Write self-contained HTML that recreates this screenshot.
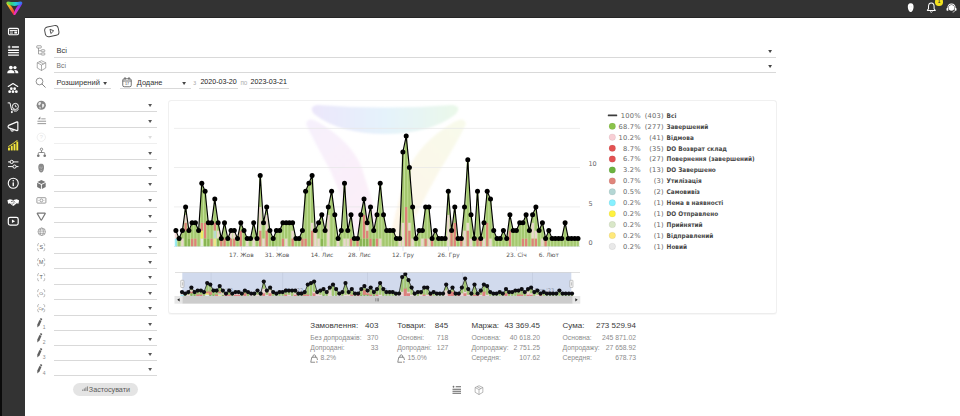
<!DOCTYPE html>
<html lang="uk"><head><meta charset="utf-8"><title>Статистика</title>
<style>
*{box-sizing:border-box;margin:0;padding:0}
html,body{width:960px;height:416px;overflow:hidden;background:#fff}
body{position:relative;font-family:"Liberation Sans",sans-serif;color:#333;font-size:7.3px}
.abs,.fic,.ul,.arr,.sbi,.t{position:absolute}
.topbar{position:absolute;left:0;top:0;width:960px;height:18.1px;background:#333;border-bottom:1.5px solid #262626}
.side{position:absolute;left:0;top:0;width:25.4px;height:416px;background:#333}
.strip{position:absolute;left:0;top:0;width:1.7px;height:416px;background:#0b0b0b}
.fic svg,.sbi svg{display:block}
.ul{height:0.8px;background:#d9d9d9}
.arr{width:4.2px;height:3.2px}
.arr svg{display:block}
.t{white-space:nowrap;line-height:1}
.card{position:absolute;left:168.3px;top:100.1px;width:608.3px;height:214px;border:1px solid #f0f0f0;border-bottom-color:#ededed;border-radius:3.5px;background:#fff;box-shadow:0 0.5px 1px rgba(0,0,0,0.035)}
.chart{position:absolute;left:0;top:0}
.btn{position:absolute;left:73.2px;top:382.5px;width:64.7px;height:13.6px;border-radius:7px;background:#e4e4e4}
.st-h{font-size:8px;color:#3a3a3a}
.st-s{font-size:6.8px;color:#8c8c8c}
.r{text-align:right}
</style></head><body>
<div class="topbar"></div><div class="side"></div><div class="strip"></div>

<!-- logo -->
<svg class="abs" style="left:5.9px;top:1px" width="16.8" height="14.5" viewBox="0 0 33 28.5">
<defs>
<linearGradient id="lg1" x1="0" y1="0" x2="1" y2="0"><stop offset="0" stop-color="#a5dc2c"/><stop offset="0.3" stop-color="#35d47a"/><stop offset="0.6" stop-color="#22c9e0"/><stop offset="1" stop-color="#3b62f2"/></linearGradient>
<linearGradient id="lg2" x1="0" y1="0" x2="0.7" y2="1"><stop offset="0" stop-color="#f3e52b"/><stop offset="0.5" stop-color="#f6921e"/><stop offset="1" stop-color="#ec2a45"/></linearGradient>
<linearGradient id="lg3" x1="1" y1="0" x2="0.3" y2="1"><stop offset="0" stop-color="#5b3df2"/><stop offset="0.5" stop-color="#a834ea"/><stop offset="1" stop-color="#f22fb0"/></linearGradient>
</defs>
<path d="M1.2 3.4 Q3 2.3 6.5 6 Q12.5 12 15 17 Q17 21 18 26.5 Q16.5 28.8 14.3 26.5 Q7 16 1.8 7 Q0.4 4.3 1.2 3.4Z" fill="url(#lg2)"/>
<path d="M31.8 3.4 Q30 2.3 26.5 6 Q20.5 12 18 17 Q16 21 15 26.5 Q16.5 28.8 18.7 26.5 Q26 16 31.2 7 Q32.6 4.3 31.8 3.4Z" fill="url(#lg3)"/>
<path d="M4 0.8 Q16.5 2.8 29 0.8 Q32.6 0.8 31.8 4 Q30.8 6.3 28 7.4 Q16.5 11.8 5 7.4 Q2.2 6.3 1.2 4 Q0.4 0.8 4 0.8Z" fill="url(#lg1)"/>
</svg>

<div class="sbi" style="top:24.5px;left:6.7px"><svg width="13" height="13" viewBox="0 0 24 24" ><rect x="2.8" y="6.3" width="18.4" height="11.6" rx="2.3" fill="none" stroke="#fff" stroke-width="2.1"/><path d="M5 10 H19" stroke="#fff" stroke-width="1.9"/><path d="M5.5 12.8 H11 M5.5 15.2 H11" stroke="#fff" stroke-width="1.3"/><rect x="13.5" y="12" width="5" height="3.8" fill="#fff"/></svg></div>
<div class="sbi" style="top:44.1px;left:6.7px"><svg width="13" height="13" viewBox="0 0 24 24" ><path d="M9 5.5 H22 M2 11.5 H22 M2 16 H22 M2 20.5 H22" stroke="#fff" stroke-width="2.6"/><path d="M1.5 5.5 H6.5 M4 3 V8" stroke="#fff" stroke-width="1.6"/></svg></div>
<div class="sbi" style="top:63.5px;left:7.4px"><svg width="11.6" height="11.6" viewBox="0 0 24 24" ><circle cx="8" cy="7.5" r="3.8" fill="#fff"/><path d="M0.5 19 Q0.5 12.5 8 12.5 Q15.5 12.5 15.5 19Z" fill="#fff"/><circle cx="16.5" cy="7.5" r="3.4" fill="#fff"/><path d="M16 12.5 Q23.5 12.5 23.5 19 H17.5 Q17.5 14.5 15 13Z" fill="#fff"/></svg></div>
<div class="sbi" style="top:82.0px;left:7.2px"><svg width="12" height="12" viewBox="0 0 24 24" ><path d="M2.5 9 L12 3 L21.5 9" fill="none" stroke="#fff" stroke-width="2.2" stroke-linejoin="round" stroke-linecap="round"/><g fill="#fff"><circle cx="8.7" cy="13.3" r="2.7"/><circle cx="15.3" cy="13.3" r="2.7"/><circle cx="5.3" cy="19.3" r="2.8"/><circle cx="12" cy="19.3" r="2.8"/><circle cx="18.7" cy="19.3" r="2.8"/></g></svg></div>
<div class="sbi" style="top:100.5px;left:6.7px"><svg width="13" height="13" viewBox="0 0 24 24" ><path d="M2 3.5 H5.5 L8.5 16.5 H13" fill="none" stroke="#fff" stroke-width="1.8" stroke-linecap="round"/><circle cx="9" cy="20.5" r="1.9" fill="#fff"/><circle cx="15.5" cy="10" r="5.6" fill="none" stroke="#fff" stroke-width="1.8"/><path d="M15.5 7 V10.5 H18" fill="none" stroke="#fff" stroke-width="1.5"/><path d="M13 18.5 Q18 20 21.5 15" fill="none" stroke="#fff" stroke-width="1.8"/></svg></div>
<div class="sbi" style="top:119.5px;left:6.7px"><svg width="13" height="13" viewBox="0 0 24 24" ><path d="M3 10 L18.5 3.5 Q20 3.2 20 5 V18 Q20 19.8 18.5 19.5 L3 14.5 Q2 14 2 12.2 Q2 10.5 3 10Z" fill="none" stroke="#fff" stroke-width="2.2" stroke-linejoin="round"/><path d="M6.5 15.5 L8 20.5 H11.5 L10.5 16.5" fill="none" stroke="#fff" stroke-width="1.8" stroke-linejoin="round"/></svg></div>
<div class="sbi" style="top:139.1px;left:6.9px"><svg width="12.5" height="12.5" viewBox="0 0 24 24" ><g fill="#f5e83b"><rect x="2" y="16.5" width="3.6" height="5.5"/><rect x="7.3" y="13" width="3.6" height="9"/><rect x="12.6" y="9.5" width="3.6" height="12.5"/><rect x="17.9" y="5" width="3.6" height="17"/><path d="M2 14 L7.5 10.5 L12.5 7 L19.5 2 L20.5 3.3 L13.4 8.3 L8.3 11.8 L2.8 15.3Z"/></g></svg></div>
<div class="sbi" style="top:158.1px;left:6.9px"><svg width="12.5" height="12.5" viewBox="0 0 24 24" ><path d="M2 7.5 H22 M2 16.5 H22" stroke="#fff" stroke-width="1.9"/><circle cx="9" cy="7.5" r="3.1" fill="#333" stroke="#fff" stroke-width="1.9"/><circle cx="14.5" cy="16.5" r="3.1" fill="#333" stroke="#fff" stroke-width="1.9"/></svg></div>
<div class="sbi" style="top:176.8px;left:6.9px"><svg width="12.5" height="12.5" viewBox="0 0 24 24" ><circle cx="12" cy="12" r="9.6" fill="none" stroke="#fff" stroke-width="2.1"/><circle cx="12" cy="7.3" r="1.5" fill="#fff"/><rect x="10.7" y="10" width="2.6" height="7.6" rx="0.8" fill="#fff"/></svg></div>
<div class="sbi" style="top:195.7px;left:6.9px"><svg width="12.6" height="12.6" viewBox="0 0 24 24" ><path d="M0.8 8.2 L5.5 6 L10 7 L12 8.3 L14 7 L18.5 6 L23.2 8.2 L21.8 14.6 L18.5 14 L13.5 18 Q12 19 10.5 18 L5.5 14 L2.2 14.6Z" fill="#fff"/><path d="M7.5 10.8 L12 9.3 L15.8 12.3 M8.8 14 L11.3 16 M11.3 12.6 L14 14.8" fill="none" stroke="#333" stroke-width="1.3"/></svg></div>
<div class="sbi" style="top:214.8px;left:6.9px"><svg width="12.5" height="12.5" viewBox="0 0 24 24" ><rect x="2.5" y="4.5" width="19" height="15" rx="3.5" fill="none" stroke="#fff" stroke-width="2.3"/><path d="M9.5 8.5 L15.5 12 L9.5 15.5Z" fill="#fff"/></svg></div>

<!-- top right icons -->
<svg class="abs" style="left:906.8px;top:3.4px" width="7.4" height="9.2" viewBox="0 0 16 21"><path d="M8 0.5 C2.5 0.5 1 5 1.5 10 C2 16 5 20.5 8 20.5 C11 20.5 14 16 14.5 10 C15 5 13.5 0.5 8 0.5Z" fill="#fff"/><path d="M4.5 9 Q5.8 8.2 7 9 M9 9 Q10.2 8.2 11.5 9 M6.5 15.5 Q8 16.3 9.5 15.5" stroke="#bbb" stroke-width="0.8" fill="none"/></svg>
<svg class="abs" style="left:925.6px;top:2px" width="10.6" height="11.2" viewBox="0 0 22 24"><path d="M11 2 C6.5 2 5 6 5 10 V14.5 L2.5 18 H19.5 L17 14.5 V10 C17 6 15.5 2 11 2Z" fill="none" stroke="#fff" stroke-width="2.2" stroke-linejoin="round"/><path d="M8.5 20.5 Q11 23.5 13.5 20.5" fill="none" stroke="#fff" stroke-width="2"/></svg>
<div class="abs" style="left:935.3px;top:-1.6px;width:7.4px;height:7.4px;border-radius:50%;background:#f3e21d"></div>
<div class="t" style="left:937.7px;top:0.3px;font-size:4.6px;font-weight:bold;color:#333">1</div>
<svg class="abs" style="left:946.3px;top:2.8px" width="11" height="10" viewBox="0 0 23 22"><path d="M11.5 1 C5.5 1 2.5 5 2.5 10 V11 H1.8 Q0.5 11 0.5 12.5 V15.5 Q0.5 17 1.8 17 H4.5 V10 C4.5 6 7 3.5 11.5 3.5 C16 3.5 18.5 6 18.5 10 V17 H21.2 Q22.5 17 22.5 15.5 V12.5 Q22.5 11 21.2 11 H20.5 V10 C20.5 5 17.5 1 11.5 1Z" fill="#fff"/><circle cx="11.5" cy="10.5" r="6.3" fill="#fff"/><path d="M18.5 17 Q18.5 20 14 20.2" fill="none" stroke="#fff" stroke-width="1.5"/></svg>

<!-- header -->
<svg class="abs" style="left:42.6px;top:24.4px" width="17.6" height="14.3" viewBox="0 0 32 26"><g transform="rotate(-11 16 13)"><rect x="3.5" y="4" width="25" height="18" rx="6" fill="none" stroke="#444" stroke-width="1.7"/><path d="M13.5 9 L19.5 13 L13.5 17Z" fill="none" stroke="#444" stroke-width="1.5" stroke-linejoin="round"/></g></svg>

<svg class="abs" style="left:35.6px;top:45.3px" width="10.5" height="11" viewBox="0 0 21 22"><g fill="none" stroke="#777" stroke-width="1.3"><rect x="1.5" y="1.5" width="9" height="4.5" rx="1"/><path d="M5 6 V18 H10 M5 11.5 H10"/><rect x="10.5" y="9.5" width="7" height="4" rx="1"/><rect x="10.5" y="16" width="7" height="4" rx="1"/></g></svg>
<div class="t" style="left:56.6px;top:47.1px;font-size:7.5px;color:#333">Всі</div>
<div class="ul" style="left:54.3px;top:56.6px;width:722px"></div>
<div class="arr" style="left:768.3px;top:49.5px"><svg width="4.2" height="3.2" viewBox="0 0 42 30" preserveAspectRatio="none"><path d="M2 1 H40 L21 29Z" fill="#444"/></svg></div>

<svg class="abs" style="left:35.5px;top:60.4px" width="11" height="11.5" viewBox="0 0 22 23"><g fill="none" stroke="#777" stroke-width="1.2" stroke-linejoin="round"><path d="M11 1.5 L19.5 5.5 V16 L11 21 L2.5 16 V5.5Z"/><path d="M2.5 5.5 L11 10 L19.5 5.5 M11 10 V21"/><path d="M6.7 3.5 L15.2 7.8"/></g></svg>
<div class="t" style="left:56.6px;top:63.2px;font-size:6.7px;color:#707070">Всі</div>
<div class="ul" style="left:54.3px;top:72.4px;width:722px"></div>
<div class="arr" style="left:768.3px;top:64.7px"><svg width="4.2" height="3.2" viewBox="0 0 42 30" preserveAspectRatio="none"><path d="M2 1 H40 L21 29Z" fill="#444"/></svg></div>

<svg class="abs" style="left:35.3px;top:77.2px" width="11" height="11" viewBox="0 0 22 22"><circle cx="9" cy="9" r="6.8" fill="none" stroke="#666" stroke-width="1.4"/><path d="M14 14 L20.5 20.5" stroke="#666" stroke-width="1.6" stroke-linecap="round"/></svg>
<div class="t" style="left:56.6px;top:79.1px;font-size:7.5px;color:#333">Розширений</div>
<div class="arr" style="left:102.6px;top:81.5px"><svg width="4.2" height="3.2" viewBox="0 0 42 30" preserveAspectRatio="none"><path d="M2 1 H40 L21 29Z" fill="#444"/></svg></div>
<div class="ul" style="left:54.3px;top:88px;width:57.1px"></div>

<svg class="abs" style="left:122px;top:77.3px" width="10" height="10.5" viewBox="0 0 20 21"><rect x="1.5" y="3.5" width="17" height="16" rx="3" fill="none" stroke="#444" stroke-width="1.5"/><path d="M1.5 8 H18.5" stroke="#444" stroke-width="1.5"/><path d="M6 1 V5 M14 1 V5" stroke="#444" stroke-width="1.6" stroke-linecap="round"/><text x="10" y="16.8" font-size="7.5" text-anchor="middle" fill="#444" font-family="Liberation Sans, sans-serif">17</text></svg>
<div class="t" style="left:136.8px;top:79.1px;font-size:7.4px;color:#333">Додане</div>
<div class="arr" style="left:182.3px;top:81.5px"><svg width="4.2" height="3.2" viewBox="0 0 42 30" preserveAspectRatio="none"><path d="M2 1 H40 L21 29Z" fill="#444"/></svg></div>
<div class="ul" style="left:119.9px;top:88px;width:70.9px"></div>

<div class="t" style="left:193.3px;top:80.1px;font-size:6.4px;color:#b0b0b0">з</div>
<div class="t" style="left:200.4px;top:79.3px;font-size:7.1px;color:#222">2020-03-20</div>
<div class="ul" style="left:198.7px;top:88px;width:39.3px"></div>
<div class="t" style="left:240.4px;top:80.1px;font-size:6.4px;color:#b0b0b0">по</div>
<div class="t" style="left:250.6px;top:79.3px;font-size:7.1px;color:#222">2023-03-21</div>
<div class="ul" style="left:249px;top:88px;width:39.5px"></div>

<!-- left filters -->
<div class="fic" style="left:36.0px;top:99.5px"><svg width="10.5" height="10.5" viewBox="0 0 24 24" ><circle cx="12" cy="12" r="10.5" fill="#878787"/><path d="M7 5 Q11 4 12 7 Q10 9 9 12 Q7 13 5 10 Q5 7 7 5Z M14 9 Q18 8 19 12 Q18 16 15 18 Q13 15 14 12Z M8 15 Q10 15 11 18 Q10 20 8 19Z" fill="#fff" opacity="0.85"/></svg></div>
<div class="ul" style="left:53.7px;top:111.1px;width:103.2px;background:#d9d9d9"></div>
<div class="arr" style="left:148.2px;top:103.9px"><svg width="4.2" height="3.2" viewBox="0 0 42 30" preserveAspectRatio="none"><path d="M2 1 H40 L21 29Z" fill="#555"/></svg></div>
<div class="fic" style="left:35.5px;top:115.0px"><svg width="11.5" height="11.5" viewBox="0 0 24 24" ><path d="M4 9 L9 3 L9 9Z" fill="#777"/><path d="M11 8 H20" stroke="#999" stroke-width="2"/><path d="M3 13 H21 M3 18 H21" stroke="#777" stroke-width="1.6"/></svg></div>
<div class="ul" style="left:53.7px;top:127.1px;width:103.2px;background:#d9d9d9"></div>
<div class="arr" style="left:148.2px;top:119.9px"><svg width="4.2" height="3.2" viewBox="0 0 42 30" preserveAspectRatio="none"><path d="M2 1 H40 L21 29Z" fill="#555"/></svg></div>
<div class="fic" style="left:36.0px;top:131.5px"><svg width="10.5" height="10.5" viewBox="0 0 24 24" ><circle cx="12" cy="12" r="9.5" fill="none" stroke="#e3e3e3" stroke-width="1.3"/><text x="12" y="16.5" font-size="13" text-anchor="middle" fill="#e3e3e3" font-family="Liberation Sans, sans-serif">?</text></svg></div>
<div class="ul" style="left:53.7px;top:143.0px;width:103.2px;background:#efefef"></div>
<div class="arr" style="left:148.2px;top:135.8px"><svg width="4.2" height="3.2" viewBox="0 0 42 30" preserveAspectRatio="none"><path d="M2 1 H40 L21 29Z" fill="#dcdcdc"/></svg></div>
<div class="fic" style="left:35.8px;top:147.0px"><svg width="11" height="11" viewBox="0 0 24 24" ><circle cx="12" cy="5" r="2.6" fill="none" stroke="#777" stroke-width="1.8"/><path d="M12 8 V12 M5 17 V14 Q5 12 7 12 H17 Q19 12 19 14 V17" fill="none" stroke="#777" stroke-width="1.9"/><circle cx="5" cy="19" r="2.9" fill="#777"/><circle cx="19" cy="19" r="2.9" fill="#777"/></svg></div>
<div class="ul" style="left:53.7px;top:158.8px;width:103.2px;background:#d9d9d9"></div>
<div class="arr" style="left:148.2px;top:151.6px"><svg width="4.2" height="3.2" viewBox="0 0 42 30" preserveAspectRatio="none"><path d="M2 1 H40 L21 29Z" fill="#555"/></svg></div>
<div class="fic" style="left:36.1px;top:163.1px"><svg width="10.4" height="10.4" viewBox="0 0 24 24" ><path d="M12 2 C6 2 5 7 5.5 12 C6 18 9 22 12 22 C15 22 18 18 18.5 12 C19 7 18 2 12 2Z" fill="#8a8a8a"/><path d="M8 10 Q9.5 9 11 10 M13 10 Q14.5 9 16 10 M10 17 Q12 18 14 17 M12 11 V14" stroke="#fff" stroke-width="0.9" fill="none" opacity="0.8"/></svg></div>
<div class="ul" style="left:53.7px;top:174.6px;width:103.2px;background:#d9d9d9"></div>
<div class="arr" style="left:148.2px;top:167.4px"><svg width="4.2" height="3.2" viewBox="0 0 42 30" preserveAspectRatio="none"><path d="M2 1 H40 L21 29Z" fill="#555"/></svg></div>
<div class="fic" style="left:35.9px;top:178.9px"><svg width="10.8" height="10.8" viewBox="0 0 24 24" ><path d="M12 2 L21 6.5 L12 11 L3 6.5Z" fill="#777"/><path d="M2.5 8.5 L11 12.8 V22 L2.5 17.7Z" fill="#777"/><path d="M21.5 8.5 L13 12.8 V22 L21.5 17.7Z" fill="#777"/></svg></div>
<div class="ul" style="left:53.7px;top:190.6px;width:103.2px;background:#d9d9d9"></div>
<div class="arr" style="left:148.2px;top:183.4px"><svg width="4.2" height="3.2" viewBox="0 0 42 30" preserveAspectRatio="none"><path d="M2 1 H40 L21 29Z" fill="#555"/></svg></div>
<div class="fic" style="left:35.9px;top:194.9px"><svg width="10.8" height="10.8" viewBox="0 0 24 24" ><rect x="2" y="6" width="20" height="12" rx="1.5" fill="none" stroke="#777" stroke-width="1.6"/><circle cx="12" cy="12" r="3.2" fill="none" stroke="#777" stroke-width="1.4"/><path d="M5.5 12 H7 M17 12 H18.5" stroke="#777" stroke-width="1.4"/></svg></div>
<div class="ul" style="left:53.7px;top:206.6px;width:103.2px;background:#d9d9d9"></div>
<div class="arr" style="left:148.2px;top:199.4px"><svg width="4.2" height="3.2" viewBox="0 0 42 30" preserveAspectRatio="none"><path d="M2 1 H40 L21 29Z" fill="#555"/></svg></div>
<div class="fic" style="left:36.0px;top:210.7px"><svg width="10.5" height="10.5" viewBox="0 0 24 24" ><path d="M3.5 5 H20.5 Q21.5 5 21 6 L13 20 Q12 21.5 11 20 L3 6 Q2.5 5 3.5 5Z" fill="none" stroke="#777" stroke-width="2.6" stroke-linejoin="round"/></svg></div>
<div class="ul" style="left:53.7px;top:222.2px;width:103.2px;background:#d9d9d9"></div>
<div class="arr" style="left:148.2px;top:215.0px"><svg width="4.2" height="3.2" viewBox="0 0 42 30" preserveAspectRatio="none"><path d="M2 1 H40 L21 29Z" fill="#555"/></svg></div>
<div class="fic" style="left:36.5px;top:226.7px"><svg width="9.5" height="9.5" viewBox="0 0 24 24" ><circle cx="12" cy="12" r="9.5" fill="none" stroke="#777" stroke-width="1.4"/><ellipse cx="12" cy="12" rx="4.2" ry="9.5" fill="none" stroke="#777" stroke-width="1.2"/><path d="M2.5 12 H21.5 M4 7.5 H20 M4 16.5 H20" stroke="#777" stroke-width="1.2"/></svg></div>
<div class="ul" style="left:53.7px;top:237.4px;width:103.2px;background:#d9d9d9"></div>
<div class="arr" style="left:148.2px;top:230.2px"><svg width="4.2" height="3.2" viewBox="0 0 42 30" preserveAspectRatio="none"><path d="M2 1 H40 L21 29Z" fill="#555"/></svg></div>
<div class="fic" style="left:36.1px;top:241.6px"><svg width="10.4" height="10.4" viewBox="0 0 24 24" ><path d="M7 3.5 Q4 3.5 4 6 V9.5 M4 14.5 V18 Q4 20.5 7 20.5 M17 3.5 Q20 3.5 20 6 V9.5 M20 14.5 V18 Q20 20.5 17 20.5" fill="none" stroke="#888" stroke-width="1.3"/><text x="12" y="16.5" font-size="12.5" text-anchor="middle" fill="#5a5a5a" font-family="Liberation Sans, sans-serif">S</text></svg></div>
<div class="ul" style="left:53.7px;top:252.8px;width:103.2px;background:#d9d9d9"></div>
<div class="arr" style="left:148.2px;top:245.6px"><svg width="4.2" height="3.2" viewBox="0 0 42 30" preserveAspectRatio="none"><path d="M2 1 H40 L21 29Z" fill="#555"/></svg></div>
<div class="fic" style="left:36.1px;top:257.0px"><svg width="10.4" height="10.4" viewBox="0 0 24 24" ><path d="M7 3.5 Q4 3.5 4 6 V9.5 M4 14.5 V18 Q4 20.5 7 20.5 M17 3.5 Q20 3.5 20 6 V9.5 M20 14.5 V18 Q20 20.5 17 20.5" fill="none" stroke="#888" stroke-width="1.3"/><text x="12" y="16.3" font-size="12" text-anchor="middle" fill="#5a5a5a" font-family="Liberation Sans, sans-serif">M</text></svg></div>
<div class="ul" style="left:53.7px;top:268.2px;width:103.2px;background:#d9d9d9"></div>
<div class="arr" style="left:148.2px;top:261.0px"><svg width="4.2" height="3.2" viewBox="0 0 42 30" preserveAspectRatio="none"><path d="M2 1 H40 L21 29Z" fill="#555"/></svg></div>
<div class="fic" style="left:36.1px;top:272.4px"><svg width="10.4" height="10.4" viewBox="0 0 24 24" ><path d="M7 3.5 Q4 3.5 4 6 V9.5 M4 14.5 V18 Q4 20.5 7 20.5 M17 3.5 Q20 3.5 20 6 V9.5 M20 14.5 V18 Q20 20.5 17 20.5" fill="none" stroke="#888" stroke-width="1.3"/><text x="12" y="16.5" font-size="12.5" text-anchor="middle" fill="#5a5a5a" font-family="Liberation Sans, sans-serif">T</text></svg></div>
<div class="ul" style="left:53.7px;top:283.6px;width:103.2px;background:#d9d9d9"></div>
<div class="arr" style="left:148.2px;top:276.4px"><svg width="4.2" height="3.2" viewBox="0 0 42 30" preserveAspectRatio="none"><path d="M2 1 H40 L21 29Z" fill="#555"/></svg></div>
<div class="fic" style="left:36.1px;top:287.8px"><svg width="10.4" height="10.4" viewBox="0 0 24 24" ><path d="M7 3.5 Q4 3.5 4 6 V9.5 M4 14.5 V18 Q4 20.5 7 20.5 M17 3.5 Q20 3.5 20 6 V9.5 M20 14.5 V18 Q20 20.5 17 20.5" fill="none" stroke="#888" stroke-width="1.3"/><text x="12" y="15.4" font-size="9.5" text-anchor="middle" fill="#5a5a5a" font-family="Liberation Sans, sans-serif">Ct</text></svg></div>
<div class="ul" style="left:53.7px;top:299.0px;width:103.2px;background:#d9d9d9"></div>
<div class="arr" style="left:148.2px;top:291.8px"><svg width="4.2" height="3.2" viewBox="0 0 42 30" preserveAspectRatio="none"><path d="M2 1 H40 L21 29Z" fill="#555"/></svg></div>
<div class="fic" style="left:36.1px;top:303.4px"><svg width="10.4" height="10.4" viewBox="0 0 24 24" ><path d="M7 3.5 Q4 3.5 4 6 V9.5 M4 14.5 V18 Q4 20.5 7 20.5 M17 3.5 Q20 3.5 20 6 V9.5 M20 14.5 V18 Q20 20.5 17 20.5" fill="none" stroke="#888" stroke-width="1.3"/><text x="12" y="15.4" font-size="9.5" text-anchor="middle" fill="#5a5a5a" font-family="Liberation Sans, sans-serif">Cp</text></svg></div>
<div class="ul" style="left:53.7px;top:314.6px;width:103.2px;background:#d9d9d9"></div>
<div class="arr" style="left:148.2px;top:307.4px"><svg width="4.2" height="3.2" viewBox="0 0 42 30" preserveAspectRatio="none"><path d="M2 1 H40 L21 29Z" fill="#555"/></svg></div>
<div class="fic" style="left:36.2px;top:318.1px"><svg width="13" height="11.2" viewBox="0 0 28 24" ><g transform="translate(6.9,11.3) rotate(24)" fill="#5f5f5f"><path d="M-2.5 -6.8 H2.5 V4.2 L0 10.2 L-2.5 4.2Z"/><path d="M-2.5 -8.2 V-9.8 Q-2.5 -11.4 -0.9 -11.4 H0.9 Q2.5 -11.4 2.5 -9.8 V-8.2Z"/></g><text x="14.6" y="23.3" font-size="10.8" fill="#8c8c8c" font-family="Liberation Sans, sans-serif">1</text></svg></div>
<div class="ul" style="left:53.7px;top:329.7px;width:103.2px;background:#d9d9d9"></div>
<div class="arr" style="left:148.2px;top:322.5px"><svg width="4.2" height="3.2" viewBox="0 0 42 30" preserveAspectRatio="none"><path d="M2 1 H40 L21 29Z" fill="#555"/></svg></div>
<div class="fic" style="left:36.2px;top:333.3px"><svg width="13" height="11.2" viewBox="0 0 28 24" ><g transform="translate(6.9,11.3) rotate(24)" fill="#5f5f5f"><path d="M-2.5 -6.8 H2.5 V4.2 L0 10.2 L-2.5 4.2Z"/><path d="M-2.5 -8.2 V-9.8 Q-2.5 -11.4 -0.9 -11.4 H0.9 Q2.5 -11.4 2.5 -9.8 V-8.2Z"/></g><text x="14.6" y="23.3" font-size="10.8" fill="#8c8c8c" font-family="Liberation Sans, sans-serif">2</text></svg></div>
<div class="ul" style="left:53.7px;top:344.9px;width:103.2px;background:#d9d9d9"></div>
<div class="arr" style="left:148.2px;top:337.7px"><svg width="4.2" height="3.2" viewBox="0 0 42 30" preserveAspectRatio="none"><path d="M2 1 H40 L21 29Z" fill="#555"/></svg></div>
<div class="fic" style="left:36.2px;top:348.4px"><svg width="13" height="11.2" viewBox="0 0 28 24" ><g transform="translate(6.9,11.3) rotate(24)" fill="#5f5f5f"><path d="M-2.5 -6.8 H2.5 V4.2 L0 10.2 L-2.5 4.2Z"/><path d="M-2.5 -8.2 V-9.8 Q-2.5 -11.4 -0.9 -11.4 H0.9 Q2.5 -11.4 2.5 -9.8 V-8.2Z"/></g><text x="14.6" y="23.3" font-size="10.8" fill="#8c8c8c" font-family="Liberation Sans, sans-serif">3</text></svg></div>
<div class="ul" style="left:53.7px;top:360.0px;width:103.2px;background:#d9d9d9"></div>
<div class="arr" style="left:148.2px;top:352.8px"><svg width="4.2" height="3.2" viewBox="0 0 42 30" preserveAspectRatio="none"><path d="M2 1 H40 L21 29Z" fill="#555"/></svg></div>
<div class="fic" style="left:36.2px;top:363.6px"><svg width="13" height="11.2" viewBox="0 0 28 24" ><g transform="translate(6.9,11.3) rotate(24)" fill="#5f5f5f"><path d="M-2.5 -6.8 H2.5 V4.2 L0 10.2 L-2.5 4.2Z"/><path d="M-2.5 -8.2 V-9.8 Q-2.5 -11.4 -0.9 -11.4 H0.9 Q2.5 -11.4 2.5 -9.8 V-8.2Z"/></g><text x="14.6" y="23.3" font-size="10.8" fill="#8c8c8c" font-family="Liberation Sans, sans-serif">4</text></svg></div>
<div class="ul" style="left:53.7px;top:375.2px;width:103.2px;background:#d9d9d9"></div>
<div class="arr" style="left:148.2px;top:368.0px"><svg width="4.2" height="3.2" viewBox="0 0 42 30" preserveAspectRatio="none"><path d="M2 1 H40 L21 29Z" fill="#555"/></svg></div>
<div class="btn"></div>
<svg class="abs" style="left:81.6px;top:386.2px" width="6.2" height="5.4" viewBox="0 0 12 10"><g fill="#8a8a8a"><rect x="0.5" y="6.5" width="2" height="3"/><rect x="3.5" y="4.5" width="2" height="5"/><rect x="6.5" y="2.5" width="2" height="7"/><rect x="9.5" y="0.5" width="2" height="9"/></g></svg>
<div class="t" style="left:88.8px;top:385.5px;font-size:7.2px;color:#5a5a5a">Застосувати</div>

<!-- chart card -->
<div class="card"></div>
<svg class="chart" width="960" height="416" viewBox="0 0 960 416">
<defs>
<linearGradient id="wm1" x1="0" y1="0" x2="1" y2="0"><stop offset="0" stop-color="#b9a6f0"/><stop offset="0.5" stop-color="#9fd0f2"/><stop offset="1" stop-color="#b4e8b0"/></linearGradient>
<linearGradient id="wm2" x1="0" y1="0" x2="0.6" y2="1"><stop offset="0" stop-color="#c9a2f0"/><stop offset="1" stop-color="#f2a0d0"/></linearGradient>
<linearGradient id="wm3" x1="1" y1="0" x2="0.4" y2="1"><stop offset="0" stop-color="#dcea9c"/><stop offset="1" stop-color="#f8cf90"/></linearGradient>
<filter id="bl" x="-10%" y="-10%" width="120%" height="120%"><feGaussianBlur stdDeviation="1.2"/></filter>
</defs>
<g filter="url(#bl)">
<path d="M318 105 Q385 110 452 105 Q462 106 456 114 Q430 134 385 134 Q340 134 314 114 Q308 106 318 105Z" fill="url(#wm1)" opacity="0.27"/>
<path d="M306 124 Q308 116 318 122 Q352 142 362 168 Q372 200 386 246 L360 246 Q345 205 330 170 Q316 145 306 124Z" fill="url(#wm2)" opacity="0.16"/>
<path d="M466 124 Q464 116 454 122 Q420 142 408 170 Q398 200 388 246 L402 246 Q420 205 440 170 Q456 145 466 124Z" fill="url(#wm3)" opacity="0.2"/>
</g>
<rect x="174" y="206.60" width="406" height="0.7" fill="#e6e6e6"/>
<rect x="174" y="167.25" width="406" height="0.7" fill="#e6e6e6"/>
<rect x="174" y="127.90" width="406" height="0.7" fill="#e6e6e6"/>
<rect x="174" y="246.20" width="406" height="0.7" fill="#d4dbe8"/>
<rect x="241.0" y="246.8" width="0.6" height="4" fill="#ccd6eb"/>
<rect x="276.7" y="246.8" width="0.6" height="4" fill="#ccd6eb"/>
<rect x="321.7" y="246.8" width="0.6" height="4" fill="#ccd6eb"/>
<rect x="359.1" y="246.8" width="0.6" height="4" fill="#ccd6eb"/>
<rect x="402.7" y="246.8" width="0.6" height="4" fill="#ccd6eb"/>
<rect x="448.3" y="246.8" width="0.6" height="4" fill="#ccd6eb"/>
<rect x="516.2" y="246.8" width="0.6" height="4" fill="#ccd6eb"/>
<rect x="548.5" y="246.8" width="0.6" height="4" fill="#ccd6eb"/>
<polygon points="175.9,246.3 175.9,230.6 179.1,238.4 182.4,230.6 185.6,207.0 188.9,230.6 192.1,222.7 195.4,222.7 198.6,230.6 201.8,183.3 205.1,191.2 208.3,222.7 211.6,222.7 214.8,199.1 218.1,222.7 221.3,238.4 224.5,222.7 227.8,238.4 231.0,230.6 234.3,230.6 237.5,238.4 240.8,222.7 244.0,230.6 247.2,238.4 250.5,238.4 253.7,222.7 257.0,238.4 260.2,175.5 263.5,222.7 266.7,207.0 269.9,230.6 273.2,238.4 276.4,230.6 279.7,230.6 282.9,222.7 286.2,222.7 289.4,222.7 292.6,222.7 295.9,238.4 299.1,238.4 302.4,230.6 305.6,191.2 308.9,183.3 312.1,175.5 315.3,230.6 318.6,222.7 321.8,214.8 325.1,230.6 328.3,207.0 331.6,191.2 334.8,214.8 338.1,238.4 341.3,230.6 344.5,183.3 347.8,230.6 351.0,214.8 354.3,238.4 357.5,238.4 360.8,214.8 364.0,199.1 367.2,222.7 370.5,207.0 373.7,230.6 377.0,214.8 380.2,183.3 383.5,214.8 386.7,230.6 389.9,230.6 393.2,230.6 396.4,238.4 399.7,238.4 402.9,151.9 406.2,136.1 409.4,167.6 412.6,207.0 415.9,238.4 419.1,230.6 422.4,230.6 425.6,207.0 428.9,207.0 432.1,238.4 435.3,230.6 438.6,238.4 441.8,238.4 445.1,238.4 448.3,191.2 451.6,230.6 454.8,207.0 458.0,238.4 461.3,238.4 464.5,207.0 467.8,159.7 471.0,214.8 474.3,238.4 477.5,191.2 480.7,238.4 484.0,222.7 487.2,191.2 490.5,199.1 493.7,230.6 497.0,238.4 500.2,238.4 503.4,230.6 506.7,238.4 509.9,214.8 513.2,230.6 516.4,230.6 519.7,222.7 522.9,222.7 526.1,214.8 529.4,230.6 532.6,214.8 535.9,207.0 539.1,230.6 542.4,222.7 545.6,238.4 548.8,230.6 552.1,238.4 555.3,238.4 558.6,238.4 561.8,238.4 565.1,222.7 568.3,238.4 571.5,238.4 574.8,238.4 578.0,238.4 578.0,246.3" fill="#acd274" fill-opacity="0.72"/>
<g opacity="0.85">
<rect x="174.75" y="238.43" width="2.3" height="7.87" fill="#8be9f5"/>
<rect x="174.75" y="230.56" width="2.3" height="7.87" fill="#f1d5d7"/>
<rect x="177.99" y="238.43" width="2.3" height="7.87" fill="#9fc468"/>
<rect x="181.24" y="238.43" width="2.3" height="7.87" fill="#f1d5d7"/>
<rect x="181.24" y="230.56" width="2.3" height="7.87" fill="#9fc468"/>
<rect x="184.48" y="230.56" width="2.3" height="15.74" fill="#7fae48"/>
<rect x="184.48" y="222.69" width="2.3" height="7.87" fill="#e27272"/>
<rect x="184.48" y="214.82" width="2.3" height="7.87" fill="#f1d5d7"/>
<rect x="184.48" y="206.95" width="2.3" height="7.87" fill="#9fc468"/>
<rect x="187.72" y="238.43" width="2.3" height="7.87" fill="#7fae48"/>
<rect x="187.72" y="230.56" width="2.3" height="7.87" fill="#9fc468"/>
<rect x="190.97" y="238.43" width="2.3" height="7.87" fill="#e27272"/>
<rect x="190.97" y="222.69" width="2.3" height="15.74" fill="#9fc468"/>
<rect x="194.21" y="238.43" width="2.3" height="7.87" fill="#e27272"/>
<rect x="194.21" y="222.69" width="2.3" height="15.74" fill="#9fc468"/>
<rect x="197.45" y="230.56" width="2.3" height="15.74" fill="#9fc468"/>
<rect x="200.69" y="238.43" width="2.3" height="7.87" fill="#ececec"/>
<rect x="200.69" y="230.56" width="2.3" height="7.87" fill="#f5ef5a"/>
<rect x="200.69" y="222.69" width="2.3" height="7.87" fill="#e27272"/>
<rect x="200.69" y="183.34" width="2.3" height="39.35" fill="#9fc468"/>
<rect x="203.94" y="238.43" width="2.3" height="7.87" fill="#7fae48"/>
<rect x="203.94" y="222.69" width="2.3" height="15.74" fill="#e27272"/>
<rect x="203.94" y="191.21" width="2.3" height="31.48" fill="#9fc468"/>
<rect x="207.18" y="238.43" width="2.3" height="7.87" fill="#7fae48"/>
<rect x="207.18" y="222.69" width="2.3" height="15.74" fill="#9fc468"/>
<rect x="210.42" y="238.43" width="2.3" height="7.87" fill="#e27272"/>
<rect x="210.42" y="222.69" width="2.3" height="15.74" fill="#9fc468"/>
<rect x="213.67" y="238.43" width="2.3" height="7.87" fill="#f7e98a"/>
<rect x="213.67" y="230.56" width="2.3" height="7.87" fill="#b5d9d6"/>
<rect x="213.67" y="222.69" width="2.3" height="7.87" fill="#e27272"/>
<rect x="213.67" y="199.08" width="2.3" height="23.61" fill="#9fc468"/>
<rect x="216.91" y="238.43" width="2.3" height="7.87" fill="#7fae48"/>
<rect x="216.91" y="230.56" width="2.3" height="7.87" fill="#f1d5d7"/>
<rect x="216.91" y="222.69" width="2.3" height="7.87" fill="#9fc468"/>
<rect x="220.15" y="238.43" width="2.3" height="7.87" fill="#e27272"/>
<rect x="223.40" y="238.43" width="2.3" height="7.87" fill="#e27272"/>
<rect x="223.40" y="222.69" width="2.3" height="15.74" fill="#9fc468"/>
<rect x="226.64" y="238.43" width="2.3" height="7.87" fill="#9fc468"/>
<rect x="229.88" y="238.43" width="2.3" height="7.87" fill="#e27272"/>
<rect x="229.88" y="230.56" width="2.3" height="7.87" fill="#f1d5d7"/>
<rect x="233.12" y="238.43" width="2.3" height="7.87" fill="#e27272"/>
<rect x="233.12" y="230.56" width="2.3" height="7.87" fill="#f1d5d7"/>
<rect x="236.37" y="238.43" width="2.3" height="7.87" fill="#9fc468"/>
<rect x="239.61" y="230.56" width="2.3" height="15.74" fill="#e27272"/>
<rect x="239.61" y="222.69" width="2.3" height="7.87" fill="#9fc468"/>
<rect x="242.85" y="230.56" width="2.3" height="15.74" fill="#9fc468"/>
<rect x="246.10" y="238.43" width="2.3" height="7.87" fill="#f1d5d7"/>
<rect x="249.34" y="238.43" width="2.3" height="7.87" fill="#9fc468"/>
<rect x="252.58" y="238.43" width="2.3" height="7.87" fill="#f1d5d7"/>
<rect x="252.58" y="222.69" width="2.3" height="15.74" fill="#9fc468"/>
<rect x="255.83" y="238.43" width="2.3" height="7.87" fill="#9fc468"/>
<rect x="259.07" y="230.56" width="2.3" height="15.74" fill="#e27272"/>
<rect x="259.07" y="206.95" width="2.3" height="23.61" fill="#f1d5d7"/>
<rect x="259.07" y="175.47" width="2.3" height="31.48" fill="#9fc468"/>
<rect x="262.31" y="238.43" width="2.3" height="7.87" fill="#f1d5d7"/>
<rect x="262.31" y="222.69" width="2.3" height="15.74" fill="#9fc468"/>
<rect x="265.55" y="230.56" width="2.3" height="15.74" fill="#e27272"/>
<rect x="265.55" y="214.82" width="2.3" height="15.74" fill="#f1d5d7"/>
<rect x="265.55" y="206.95" width="2.3" height="7.87" fill="#9fc468"/>
<rect x="268.80" y="230.56" width="2.3" height="15.74" fill="#9fc468"/>
<rect x="272.04" y="238.43" width="2.3" height="7.87" fill="#7fae48"/>
<rect x="275.28" y="230.56" width="2.3" height="15.74" fill="#9fc468"/>
<rect x="278.53" y="230.56" width="2.3" height="15.74" fill="#9fc468"/>
<rect x="281.77" y="238.43" width="2.3" height="7.87" fill="#e27272"/>
<rect x="281.77" y="222.69" width="2.3" height="15.74" fill="#9fc468"/>
<rect x="285.01" y="238.43" width="2.3" height="7.87" fill="#f1d5d7"/>
<rect x="285.01" y="222.69" width="2.3" height="15.74" fill="#9fc468"/>
<rect x="288.25" y="222.69" width="2.3" height="23.61" fill="#9fc468"/>
<rect x="291.50" y="238.43" width="2.3" height="7.87" fill="#e27272"/>
<rect x="291.50" y="230.56" width="2.3" height="7.87" fill="#f1d5d7"/>
<rect x="291.50" y="222.69" width="2.3" height="7.87" fill="#9fc468"/>
<rect x="294.74" y="238.43" width="2.3" height="7.87" fill="#9fc468"/>
<rect x="297.98" y="238.43" width="2.3" height="7.87" fill="#9fc468"/>
<rect x="301.23" y="238.43" width="2.3" height="7.87" fill="#e27272"/>
<rect x="301.23" y="230.56" width="2.3" height="7.87" fill="#9fc468"/>
<rect x="304.47" y="238.43" width="2.3" height="7.87" fill="#e27272"/>
<rect x="304.47" y="191.21" width="2.3" height="47.22" fill="#9fc468"/>
<rect x="307.71" y="183.34" width="2.3" height="62.96" fill="#9fc468"/>
<rect x="310.96" y="230.56" width="2.3" height="15.74" fill="#e27272"/>
<rect x="310.96" y="222.69" width="2.3" height="7.87" fill="#f1d5d7"/>
<rect x="310.96" y="175.47" width="2.3" height="47.22" fill="#9fc468"/>
<rect x="314.20" y="230.56" width="2.3" height="15.74" fill="#f1d5d7"/>
<rect x="317.44" y="238.43" width="2.3" height="7.87" fill="#f1d5d7"/>
<rect x="317.44" y="222.69" width="2.3" height="15.74" fill="#9fc468"/>
<rect x="320.69" y="238.43" width="2.3" height="7.87" fill="#7fae48"/>
<rect x="320.69" y="214.82" width="2.3" height="23.61" fill="#9fc468"/>
<rect x="323.93" y="230.56" width="2.3" height="15.74" fill="#9fc468"/>
<rect x="327.17" y="214.82" width="2.3" height="31.48" fill="#f1d5d7"/>
<rect x="327.17" y="206.95" width="2.3" height="7.87" fill="#9fc468"/>
<rect x="330.41" y="191.21" width="2.3" height="55.09" fill="#9fc468"/>
<rect x="333.66" y="214.82" width="2.3" height="31.48" fill="#9fc468"/>
<rect x="336.90" y="238.43" width="2.3" height="7.87" fill="#f1d5d7"/>
<rect x="340.14" y="230.56" width="2.3" height="15.74" fill="#9fc468"/>
<rect x="343.39" y="238.43" width="2.3" height="7.87" fill="#f1d5d7"/>
<rect x="343.39" y="183.34" width="2.3" height="55.09" fill="#9fc468"/>
<rect x="346.63" y="238.43" width="2.3" height="7.87" fill="#f1d5d7"/>
<rect x="346.63" y="230.56" width="2.3" height="7.87" fill="#9fc468"/>
<rect x="349.87" y="238.43" width="2.3" height="7.87" fill="#e27272"/>
<rect x="349.87" y="214.82" width="2.3" height="23.61" fill="#9fc468"/>
<rect x="353.12" y="238.43" width="2.3" height="7.87" fill="#9fc468"/>
<rect x="356.36" y="238.43" width="2.3" height="7.87" fill="#e27272"/>
<rect x="359.60" y="238.43" width="2.3" height="7.87" fill="#7fae48"/>
<rect x="359.60" y="214.82" width="2.3" height="23.61" fill="#9fc468"/>
<rect x="362.84" y="238.43" width="2.3" height="7.87" fill="#7fae48"/>
<rect x="362.84" y="214.82" width="2.3" height="23.61" fill="#e27272"/>
<rect x="362.84" y="199.08" width="2.3" height="15.74" fill="#9fc468"/>
<rect x="366.09" y="238.43" width="2.3" height="7.87" fill="#7fae48"/>
<rect x="366.09" y="230.56" width="2.3" height="7.87" fill="#e27272"/>
<rect x="366.09" y="222.69" width="2.3" height="7.87" fill="#f1d5d7"/>
<rect x="369.33" y="238.43" width="2.3" height="7.87" fill="#e27272"/>
<rect x="369.33" y="206.95" width="2.3" height="31.48" fill="#9fc468"/>
<rect x="372.57" y="238.43" width="2.3" height="7.87" fill="#7fae48"/>
<rect x="372.57" y="230.56" width="2.3" height="7.87" fill="#9fc468"/>
<rect x="375.82" y="238.43" width="2.3" height="7.87" fill="#e27272"/>
<rect x="375.82" y="214.82" width="2.3" height="23.61" fill="#9fc468"/>
<rect x="379.06" y="238.43" width="2.3" height="7.87" fill="#f1d5d7"/>
<rect x="379.06" y="183.34" width="2.3" height="55.09" fill="#9fc468"/>
<rect x="382.30" y="214.82" width="2.3" height="31.48" fill="#9fc468"/>
<rect x="385.55" y="230.56" width="2.3" height="15.74" fill="#9fc468"/>
<rect x="388.79" y="230.56" width="2.3" height="15.74" fill="#9fc468"/>
<rect x="392.03" y="230.56" width="2.3" height="15.74" fill="#9fc468"/>
<rect x="395.27" y="238.43" width="2.3" height="7.87" fill="#9fc468"/>
<rect x="398.52" y="238.43" width="2.3" height="7.87" fill="#f1d5d7"/>
<rect x="401.76" y="222.69" width="2.3" height="23.61" fill="#f1d5d7"/>
<rect x="401.76" y="151.86" width="2.3" height="70.83" fill="#9fc468"/>
<rect x="405.00" y="206.95" width="2.3" height="39.35" fill="#e27272"/>
<rect x="405.00" y="136.12" width="2.3" height="70.83" fill="#9fc468"/>
<rect x="408.25" y="230.56" width="2.3" height="15.74" fill="#e27272"/>
<rect x="408.25" y="222.69" width="2.3" height="7.87" fill="#f1d5d7"/>
<rect x="408.25" y="167.60" width="2.3" height="55.09" fill="#9fc468"/>
<rect x="411.49" y="238.43" width="2.3" height="7.87" fill="#f1d5d7"/>
<rect x="411.49" y="206.95" width="2.3" height="31.48" fill="#9fc468"/>
<rect x="414.73" y="238.43" width="2.3" height="7.87" fill="#9fc468"/>
<rect x="417.98" y="230.56" width="2.3" height="15.74" fill="#9fc468"/>
<rect x="421.22" y="238.43" width="2.3" height="7.87" fill="#f1d5d7"/>
<rect x="421.22" y="230.56" width="2.3" height="7.87" fill="#9fc468"/>
<rect x="424.46" y="238.43" width="2.3" height="7.87" fill="#e27272"/>
<rect x="424.46" y="206.95" width="2.3" height="31.48" fill="#9fc468"/>
<rect x="427.70" y="238.43" width="2.3" height="7.87" fill="#f1d5d7"/>
<rect x="427.70" y="206.95" width="2.3" height="31.48" fill="#9fc468"/>
<rect x="430.95" y="238.43" width="2.3" height="7.87" fill="#e27272"/>
<rect x="434.19" y="230.56" width="2.3" height="15.74" fill="#9fc468"/>
<rect x="437.43" y="238.43" width="2.3" height="7.87" fill="#9fc468"/>
<rect x="440.68" y="238.43" width="2.3" height="7.87" fill="#9fc468"/>
<rect x="443.92" y="238.43" width="2.3" height="7.87" fill="#9fc468"/>
<rect x="447.16" y="214.82" width="2.3" height="31.48" fill="#f1d5d7"/>
<rect x="447.16" y="191.21" width="2.3" height="23.61" fill="#9fc468"/>
<rect x="450.40" y="230.56" width="2.3" height="15.74" fill="#e27272"/>
<rect x="453.65" y="222.69" width="2.3" height="23.61" fill="#e27272"/>
<rect x="453.65" y="206.95" width="2.3" height="15.74" fill="#9fc468"/>
<rect x="456.89" y="238.43" width="2.3" height="7.87" fill="#9fc468"/>
<rect x="460.13" y="238.43" width="2.3" height="7.87" fill="#e27272"/>
<rect x="463.38" y="230.56" width="2.3" height="15.74" fill="#f1d5d7"/>
<rect x="463.38" y="206.95" width="2.3" height="23.61" fill="#9fc468"/>
<rect x="466.62" y="230.56" width="2.3" height="15.74" fill="#e27272"/>
<rect x="466.62" y="222.69" width="2.3" height="7.87" fill="#f1d5d7"/>
<rect x="466.62" y="159.73" width="2.3" height="62.96" fill="#9fc468"/>
<rect x="469.86" y="238.43" width="2.3" height="7.87" fill="#f1d5d7"/>
<rect x="469.86" y="214.82" width="2.3" height="23.61" fill="#9fc468"/>
<rect x="473.11" y="238.43" width="2.3" height="7.87" fill="#9fc468"/>
<rect x="476.35" y="238.43" width="2.3" height="7.87" fill="#e27272"/>
<rect x="476.35" y="191.21" width="2.3" height="47.22" fill="#9fc468"/>
<rect x="479.59" y="238.43" width="2.3" height="7.87" fill="#e27272"/>
<rect x="482.84" y="238.43" width="2.3" height="7.87" fill="#f1d5d7"/>
<rect x="482.84" y="222.69" width="2.3" height="15.74" fill="#9fc468"/>
<rect x="486.08" y="222.69" width="2.3" height="23.61" fill="#e27272"/>
<rect x="486.08" y="191.21" width="2.3" height="31.48" fill="#9fc468"/>
<rect x="489.32" y="238.43" width="2.3" height="7.87" fill="#f1d5d7"/>
<rect x="489.32" y="199.08" width="2.3" height="39.35" fill="#9fc468"/>
<rect x="492.56" y="230.56" width="2.3" height="15.74" fill="#9fc468"/>
<rect x="495.81" y="238.43" width="2.3" height="7.87" fill="#9fc468"/>
<rect x="499.05" y="238.43" width="2.3" height="7.87" fill="#9fc468"/>
<rect x="502.29" y="230.56" width="2.3" height="15.74" fill="#9fc468"/>
<rect x="505.54" y="238.43" width="2.3" height="7.87" fill="#9fc468"/>
<rect x="508.78" y="230.56" width="2.3" height="15.74" fill="#e27272"/>
<rect x="508.78" y="214.82" width="2.3" height="15.74" fill="#9fc468"/>
<rect x="512.02" y="230.56" width="2.3" height="15.74" fill="#9fc468"/>
<rect x="515.26" y="230.56" width="2.3" height="15.74" fill="#9fc468"/>
<rect x="518.51" y="222.69" width="2.3" height="23.61" fill="#9fc468"/>
<rect x="521.75" y="238.43" width="2.3" height="7.87" fill="#e27272"/>
<rect x="521.75" y="222.69" width="2.3" height="15.74" fill="#9fc468"/>
<rect x="524.99" y="238.43" width="2.3" height="7.87" fill="#e27272"/>
<rect x="524.99" y="214.82" width="2.3" height="23.61" fill="#9fc468"/>
<rect x="528.24" y="230.56" width="2.3" height="15.74" fill="#9fc468"/>
<rect x="531.48" y="238.43" width="2.3" height="7.87" fill="#e27272"/>
<rect x="531.48" y="222.69" width="2.3" height="15.74" fill="#f1d5d7"/>
<rect x="531.48" y="214.82" width="2.3" height="7.87" fill="#9fc468"/>
<rect x="534.72" y="238.43" width="2.3" height="7.87" fill="#e27272"/>
<rect x="534.72" y="230.56" width="2.3" height="7.87" fill="#f1d5d7"/>
<rect x="534.72" y="206.95" width="2.3" height="23.61" fill="#9fc468"/>
<rect x="537.97" y="230.56" width="2.3" height="15.74" fill="#9fc468"/>
<rect x="541.21" y="238.43" width="2.3" height="7.87" fill="#f1d5d7"/>
<rect x="541.21" y="222.69" width="2.3" height="15.74" fill="#9fc468"/>
<rect x="544.45" y="238.43" width="2.3" height="7.87" fill="#e27272"/>
<rect x="547.70" y="230.56" width="2.3" height="15.74" fill="#9fc468"/>
<rect x="550.94" y="238.43" width="2.3" height="7.87" fill="#9fc468"/>
<rect x="554.18" y="238.43" width="2.3" height="7.87" fill="#9fc468"/>
<rect x="557.42" y="238.43" width="2.3" height="7.87" fill="#9fc468"/>
<rect x="560.67" y="238.43" width="2.3" height="7.87" fill="#9fc468"/>
<rect x="563.91" y="222.69" width="2.3" height="23.61" fill="#9fc468"/>
<rect x="567.15" y="238.43" width="2.3" height="7.87" fill="#9fc468"/>
<rect x="570.40" y="238.43" width="2.3" height="7.87" fill="#9fc468"/>
<rect x="573.64" y="238.43" width="2.3" height="7.87" fill="#9fc468"/>
<rect x="576.88" y="238.43" width="2.3" height="7.87" fill="#9fc468"/>
</g>
<polyline points="175.9,230.6 179.1,238.4 182.4,230.6 185.6,207.0 188.9,230.6 192.1,222.7 195.4,222.7 198.6,230.6 201.8,183.3 205.1,191.2 208.3,222.7 211.6,222.7 214.8,199.1 218.1,222.7 221.3,238.4 224.5,222.7 227.8,238.4 231.0,230.6 234.3,230.6 237.5,238.4 240.8,222.7 244.0,230.6 247.2,238.4 250.5,238.4 253.7,222.7 257.0,238.4 260.2,175.5 263.5,222.7 266.7,207.0 269.9,230.6 273.2,238.4 276.4,230.6 279.7,230.6 282.9,222.7 286.2,222.7 289.4,222.7 292.6,222.7 295.9,238.4 299.1,238.4 302.4,230.6 305.6,191.2 308.9,183.3 312.1,175.5 315.3,230.6 318.6,222.7 321.8,214.8 325.1,230.6 328.3,207.0 331.6,191.2 334.8,214.8 338.1,238.4 341.3,230.6 344.5,183.3 347.8,230.6 351.0,214.8 354.3,238.4 357.5,238.4 360.8,214.8 364.0,199.1 367.2,222.7 370.5,207.0 373.7,230.6 377.0,214.8 380.2,183.3 383.5,214.8 386.7,230.6 389.9,230.6 393.2,230.6 396.4,238.4 399.7,238.4 402.9,151.9 406.2,136.1 409.4,167.6 412.6,207.0 415.9,238.4 419.1,230.6 422.4,230.6 425.6,207.0 428.9,207.0 432.1,238.4 435.3,230.6 438.6,238.4 441.8,238.4 445.1,238.4 448.3,191.2 451.6,230.6 454.8,207.0 458.0,238.4 461.3,238.4 464.5,207.0 467.8,159.7 471.0,214.8 474.3,238.4 477.5,191.2 480.7,238.4 484.0,222.7 487.2,191.2 490.5,199.1 493.7,230.6 497.0,238.4 500.2,238.4 503.4,230.6 506.7,238.4 509.9,214.8 513.2,230.6 516.4,230.6 519.7,222.7 522.9,222.7 526.1,214.8 529.4,230.6 532.6,214.8 535.9,207.0 539.1,230.6 542.4,222.7 545.6,238.4 548.8,230.6 552.1,238.4 555.3,238.4 558.6,238.4 561.8,238.4 565.1,222.7 568.3,238.4 571.5,238.4 574.8,238.4 578.0,238.4" fill="none" stroke="#000" stroke-width="1.15" stroke-linejoin="round"/>
<g fill="#000">
<circle cx="175.9" cy="230.6" r="2.5"/>
<circle cx="179.1" cy="238.4" r="2.5"/>
<circle cx="182.4" cy="230.6" r="2.5"/>
<circle cx="185.6" cy="207.0" r="2.5"/>
<circle cx="188.9" cy="230.6" r="2.5"/>
<circle cx="192.1" cy="222.7" r="2.5"/>
<circle cx="195.4" cy="222.7" r="2.5"/>
<circle cx="198.6" cy="230.6" r="2.5"/>
<circle cx="201.8" cy="183.3" r="2.5"/>
<circle cx="205.1" cy="191.2" r="2.5"/>
<circle cx="208.3" cy="222.7" r="2.5"/>
<circle cx="211.6" cy="222.7" r="2.5"/>
<circle cx="214.8" cy="199.1" r="2.5"/>
<circle cx="218.1" cy="222.7" r="2.5"/>
<circle cx="221.3" cy="238.4" r="2.5"/>
<circle cx="224.5" cy="222.7" r="2.5"/>
<circle cx="227.8" cy="238.4" r="2.5"/>
<circle cx="231.0" cy="230.6" r="2.5"/>
<circle cx="234.3" cy="230.6" r="2.5"/>
<circle cx="237.5" cy="238.4" r="2.5"/>
<circle cx="240.8" cy="222.7" r="2.5"/>
<circle cx="244.0" cy="230.6" r="2.5"/>
<circle cx="247.2" cy="238.4" r="2.5"/>
<circle cx="250.5" cy="238.4" r="2.5"/>
<circle cx="253.7" cy="222.7" r="2.5"/>
<circle cx="257.0" cy="238.4" r="2.5"/>
<circle cx="260.2" cy="175.5" r="2.5"/>
<circle cx="263.5" cy="222.7" r="2.5"/>
<circle cx="266.7" cy="207.0" r="2.5"/>
<circle cx="269.9" cy="230.6" r="2.5"/>
<circle cx="273.2" cy="238.4" r="2.5"/>
<circle cx="276.4" cy="230.6" r="2.5"/>
<circle cx="279.7" cy="230.6" r="2.5"/>
<circle cx="282.9" cy="222.7" r="2.5"/>
<circle cx="286.2" cy="222.7" r="2.5"/>
<circle cx="289.4" cy="222.7" r="2.5"/>
<circle cx="292.6" cy="222.7" r="2.5"/>
<circle cx="295.9" cy="238.4" r="2.5"/>
<circle cx="299.1" cy="238.4" r="2.5"/>
<circle cx="302.4" cy="230.6" r="2.5"/>
<circle cx="305.6" cy="191.2" r="2.5"/>
<circle cx="308.9" cy="183.3" r="2.5"/>
<circle cx="312.1" cy="175.5" r="2.5"/>
<circle cx="315.3" cy="230.6" r="2.5"/>
<circle cx="318.6" cy="222.7" r="2.5"/>
<circle cx="321.8" cy="214.8" r="2.5"/>
<circle cx="325.1" cy="230.6" r="2.5"/>
<circle cx="328.3" cy="207.0" r="2.5"/>
<circle cx="331.6" cy="191.2" r="2.5"/>
<circle cx="334.8" cy="214.8" r="2.5"/>
<circle cx="338.1" cy="238.4" r="2.5"/>
<circle cx="341.3" cy="230.6" r="2.5"/>
<circle cx="344.5" cy="183.3" r="2.5"/>
<circle cx="347.8" cy="230.6" r="2.5"/>
<circle cx="351.0" cy="214.8" r="2.5"/>
<circle cx="354.3" cy="238.4" r="2.5"/>
<circle cx="357.5" cy="238.4" r="2.5"/>
<circle cx="360.8" cy="214.8" r="2.5"/>
<circle cx="364.0" cy="199.1" r="2.5"/>
<circle cx="367.2" cy="222.7" r="2.5"/>
<circle cx="370.5" cy="207.0" r="2.5"/>
<circle cx="373.7" cy="230.6" r="2.5"/>
<circle cx="377.0" cy="214.8" r="2.5"/>
<circle cx="380.2" cy="183.3" r="2.5"/>
<circle cx="383.5" cy="214.8" r="2.5"/>
<circle cx="386.7" cy="230.6" r="2.5"/>
<circle cx="389.9" cy="230.6" r="2.5"/>
<circle cx="393.2" cy="230.6" r="2.5"/>
<circle cx="396.4" cy="238.4" r="2.5"/>
<circle cx="399.7" cy="238.4" r="2.5"/>
<circle cx="402.9" cy="151.9" r="2.5"/>
<circle cx="406.2" cy="136.1" r="2.5"/>
<circle cx="409.4" cy="167.6" r="2.5"/>
<circle cx="412.6" cy="207.0" r="2.5"/>
<circle cx="415.9" cy="238.4" r="2.5"/>
<circle cx="419.1" cy="230.6" r="2.5"/>
<circle cx="422.4" cy="230.6" r="2.5"/>
<circle cx="425.6" cy="207.0" r="2.5"/>
<circle cx="428.9" cy="207.0" r="2.5"/>
<circle cx="432.1" cy="238.4" r="2.5"/>
<circle cx="435.3" cy="230.6" r="2.5"/>
<circle cx="438.6" cy="238.4" r="2.5"/>
<circle cx="441.8" cy="238.4" r="2.5"/>
<circle cx="445.1" cy="238.4" r="2.5"/>
<circle cx="448.3" cy="191.2" r="2.5"/>
<circle cx="451.6" cy="230.6" r="2.5"/>
<circle cx="454.8" cy="207.0" r="2.5"/>
<circle cx="458.0" cy="238.4" r="2.5"/>
<circle cx="461.3" cy="238.4" r="2.5"/>
<circle cx="464.5" cy="207.0" r="2.5"/>
<circle cx="467.8" cy="159.7" r="2.5"/>
<circle cx="471.0" cy="214.8" r="2.5"/>
<circle cx="474.3" cy="238.4" r="2.5"/>
<circle cx="477.5" cy="191.2" r="2.5"/>
<circle cx="480.7" cy="238.4" r="2.5"/>
<circle cx="484.0" cy="222.7" r="2.5"/>
<circle cx="487.2" cy="191.2" r="2.5"/>
<circle cx="490.5" cy="199.1" r="2.5"/>
<circle cx="493.7" cy="230.6" r="2.5"/>
<circle cx="497.0" cy="238.4" r="2.5"/>
<circle cx="500.2" cy="238.4" r="2.5"/>
<circle cx="503.4" cy="230.6" r="2.5"/>
<circle cx="506.7" cy="238.4" r="2.5"/>
<circle cx="509.9" cy="214.8" r="2.5"/>
<circle cx="513.2" cy="230.6" r="2.5"/>
<circle cx="516.4" cy="230.6" r="2.5"/>
<circle cx="519.7" cy="222.7" r="2.5"/>
<circle cx="522.9" cy="222.7" r="2.5"/>
<circle cx="526.1" cy="214.8" r="2.5"/>
<circle cx="529.4" cy="230.6" r="2.5"/>
<circle cx="532.6" cy="214.8" r="2.5"/>
<circle cx="535.9" cy="207.0" r="2.5"/>
<circle cx="539.1" cy="230.6" r="2.5"/>
<circle cx="542.4" cy="222.7" r="2.5"/>
<circle cx="545.6" cy="238.4" r="2.5"/>
<circle cx="548.8" cy="230.6" r="2.5"/>
<circle cx="552.1" cy="238.4" r="2.5"/>
<circle cx="555.3" cy="238.4" r="2.5"/>
<circle cx="558.6" cy="238.4" r="2.5"/>
<circle cx="561.8" cy="238.4" r="2.5"/>
<circle cx="565.1" cy="222.7" r="2.5"/>
<circle cx="568.3" cy="238.4" r="2.5"/>
<circle cx="571.5" cy="238.4" r="2.5"/>
<circle cx="574.8" cy="238.4" r="2.5"/>
<circle cx="578.0" cy="238.4" r="2.5"/>
</g>
<g font-family="'DejaVu Sans', 'Liberation Sans', sans-serif" font-size="5.9" fill="#555" text-anchor="middle">
<text x="241.3" y="256.8">17. Жов</text>
<text x="277" y="256.8">31. Жов</text>
<text x="322" y="256.8">14. Лис</text>
<text x="359.4" y="256.8">28. Лис</text>
<text x="403" y="256.8">12. Гру</text>
<text x="448.6" y="256.8">26. Гру</text>
<text x="516.5" y="256.8">23. Січ</text>
<text x="548.8" y="256.8">6. Лют</text>
</g>
<g font-family="'DejaVu Sans', 'Liberation Sans', sans-serif" font-size="6.5" fill="#666" text-anchor="start">
<text x="588.4" y="245.1">0</text>
<text x="588.4" y="205.8">5</text>
<text x="588.4" y="166.4">10</text>
</g>
<rect x="175" y="272.3" width="405" height="23.7" fill="#fff"/>
<g font-family="'DejaVu Sans', 'Liberation Sans', sans-serif" font-size="5" fill="#999">
<rect x="210.8" y="272.3" width="0.5" height="23.7" fill="#e0e0e0"/>
<text x="212.3" y="292.4">Жов '22</text>
<rect x="282.6" y="272.3" width="0.5" height="23.7" fill="#e0e0e0"/>
<text x="284.1" y="292.4">Лис '22</text>
<rect x="367.3" y="272.3" width="0.5" height="23.7" fill="#e0e0e0"/>
<text x="368.8" y="292.4">Гру '22</text>
<rect x="462.4" y="272.3" width="0.5" height="23.7" fill="#e0e0e0"/>
<text x="463.9" y="292.4">Січ '23</text>
<rect x="532.4" y="272.3" width="0.5" height="23.7" fill="#e0e0e0"/>
<text x="533.9" y="292.4">Лют '23</text>
</g>
<rect x="182.3" y="272.3" width="389" height="23.7" fill="#6685c2" fill-opacity="0.3"/>
<polygon points="182.0,295.1 182.0,292.1 185.1,293.6 188.3,292.1 191.4,287.6 194.6,292.1 197.7,290.6 200.9,290.6 204.0,292.1 207.2,283.1 210.3,284.6 213.5,290.6 216.6,290.6 219.7,286.1 222.9,290.6 226.0,293.6 229.2,290.6 232.3,293.6 235.5,292.1 238.6,292.1 241.8,293.6 244.9,290.6 248.0,292.1 251.2,293.6 254.3,293.6 257.5,290.6 260.6,293.6 263.8,281.6 266.9,290.6 270.1,287.6 273.2,292.1 276.4,293.6 279.5,292.1 282.6,292.1 285.8,290.6 288.9,290.6 292.1,290.6 295.2,290.6 298.4,293.6 301.5,293.6 304.7,292.1 307.8,284.6 311.0,283.1 314.1,281.6 317.2,292.1 320.4,290.6 323.5,289.1 326.7,292.1 329.8,287.6 333.0,284.6 336.1,289.1 339.3,293.6 342.4,292.1 345.5,283.1 348.7,292.1 351.8,289.1 355.0,293.6 358.1,293.6 361.3,289.1 364.4,286.1 367.6,290.6 370.7,287.6 373.9,292.1 377.0,289.1 380.1,283.1 383.3,289.1 386.4,292.1 389.6,292.1 392.7,292.1 395.9,293.6 399.0,293.6 402.2,277.1 405.3,274.1 408.5,280.1 411.6,287.6 414.7,293.6 417.9,292.1 421.0,292.1 424.2,287.6 427.3,287.6 430.5,293.6 433.6,292.1 436.8,293.6 439.9,293.6 443.0,293.6 446.2,284.6 449.3,292.1 452.5,287.6 455.6,293.6 458.8,293.6 461.9,287.6 465.1,278.6 468.2,289.1 471.4,293.6 474.5,284.6 477.6,293.6 480.8,290.6 483.9,284.6 487.1,286.1 490.2,292.1 493.4,293.6 496.5,293.6 499.7,292.1 502.8,293.6 506.0,289.1 509.1,292.1 512.2,292.1 515.4,290.6 518.5,290.6 521.7,289.1 524.8,292.1 528.0,289.1 531.1,287.6 534.3,292.1 537.4,290.6 540.5,293.6 543.7,292.1 546.8,293.6 550.0,293.6 553.1,293.6 556.3,293.6 559.4,290.6 562.6,293.6 565.7,293.6 568.9,293.6 572.0,293.6 572.0,295.1" fill="#a5d36e" fill-opacity="0.45"/>
<g opacity="0.85">
<rect x="180.45" y="293.60" width="3.1" height="2.70" fill="#8be9f5"/>
<rect x="180.45" y="292.10" width="3.1" height="2.70" fill="#f1d5d7"/>
<rect x="184.05" y="293.60" width="2.2" height="2.70" fill="#9fc468"/>
<rect x="186.74" y="293.60" width="3.1" height="2.70" fill="#f1d5d7"/>
<rect x="187.19" y="292.10" width="2.2" height="2.70" fill="#9fc468"/>
<rect x="190.34" y="292.10" width="2.2" height="4.20" fill="#7fae48"/>
<rect x="189.89" y="290.60" width="3.1" height="2.70" fill="#e27272"/>
<rect x="189.89" y="289.10" width="3.1" height="2.70" fill="#f1d5d7"/>
<rect x="190.34" y="287.60" width="2.2" height="2.70" fill="#9fc468"/>
<rect x="193.48" y="293.60" width="2.2" height="2.70" fill="#7fae48"/>
<rect x="193.48" y="292.10" width="2.2" height="2.70" fill="#9fc468"/>
<rect x="196.18" y="293.60" width="3.1" height="2.70" fill="#e27272"/>
<rect x="196.63" y="290.60" width="2.2" height="4.20" fill="#9fc468"/>
<rect x="199.32" y="293.60" width="3.1" height="2.70" fill="#e27272"/>
<rect x="199.77" y="290.60" width="2.2" height="4.20" fill="#9fc468"/>
<rect x="202.92" y="292.10" width="2.2" height="4.20" fill="#9fc468"/>
<rect x="205.61" y="293.60" width="3.1" height="2.70" fill="#ececec"/>
<rect x="205.61" y="292.10" width="3.1" height="2.70" fill="#f5ef5a"/>
<rect x="205.61" y="290.60" width="3.1" height="2.70" fill="#e27272"/>
<rect x="206.06" y="283.10" width="2.2" height="8.70" fill="#9fc468"/>
<rect x="209.21" y="293.60" width="2.2" height="2.70" fill="#7fae48"/>
<rect x="208.76" y="290.60" width="3.1" height="4.20" fill="#e27272"/>
<rect x="209.21" y="284.60" width="2.2" height="7.20" fill="#9fc468"/>
<rect x="212.35" y="293.60" width="2.2" height="2.70" fill="#7fae48"/>
<rect x="212.35" y="290.60" width="2.2" height="4.20" fill="#9fc468"/>
<rect x="215.05" y="293.60" width="3.1" height="2.70" fill="#e27272"/>
<rect x="215.50" y="290.60" width="2.2" height="4.20" fill="#9fc468"/>
<rect x="218.19" y="293.60" width="3.1" height="2.70" fill="#f7e98a"/>
<rect x="218.19" y="292.10" width="3.1" height="2.70" fill="#b5d9d6"/>
<rect x="218.19" y="290.60" width="3.1" height="2.70" fill="#e27272"/>
<rect x="218.64" y="286.10" width="2.2" height="5.70" fill="#9fc468"/>
<rect x="221.79" y="293.60" width="2.2" height="2.70" fill="#7fae48"/>
<rect x="221.34" y="292.10" width="3.1" height="2.70" fill="#f1d5d7"/>
<rect x="221.79" y="290.60" width="2.2" height="2.70" fill="#9fc468"/>
<rect x="224.48" y="293.60" width="3.1" height="2.70" fill="#e27272"/>
<rect x="227.63" y="293.60" width="3.1" height="2.70" fill="#e27272"/>
<rect x="228.08" y="290.60" width="2.2" height="4.20" fill="#9fc468"/>
<rect x="231.22" y="293.60" width="2.2" height="2.70" fill="#9fc468"/>
<rect x="233.92" y="293.60" width="3.1" height="2.70" fill="#e27272"/>
<rect x="233.92" y="292.10" width="3.1" height="2.70" fill="#f1d5d7"/>
<rect x="237.06" y="293.60" width="3.1" height="2.70" fill="#e27272"/>
<rect x="237.06" y="292.10" width="3.1" height="2.70" fill="#f1d5d7"/>
<rect x="240.66" y="293.60" width="2.2" height="2.70" fill="#9fc468"/>
<rect x="243.35" y="292.10" width="3.1" height="4.20" fill="#e27272"/>
<rect x="243.80" y="290.60" width="2.2" height="2.70" fill="#9fc468"/>
<rect x="246.95" y="292.10" width="2.2" height="4.20" fill="#9fc468"/>
<rect x="249.64" y="293.60" width="3.1" height="2.70" fill="#f1d5d7"/>
<rect x="253.24" y="293.60" width="2.2" height="2.70" fill="#9fc468"/>
<rect x="255.93" y="293.60" width="3.1" height="2.70" fill="#f1d5d7"/>
<rect x="256.38" y="290.60" width="2.2" height="4.20" fill="#9fc468"/>
<rect x="259.53" y="293.60" width="2.2" height="2.70" fill="#9fc468"/>
<rect x="262.22" y="292.10" width="3.1" height="4.20" fill="#e27272"/>
<rect x="262.22" y="287.60" width="3.1" height="5.70" fill="#f1d5d7"/>
<rect x="262.67" y="281.60" width="2.2" height="7.20" fill="#9fc468"/>
<rect x="265.37" y="293.60" width="3.1" height="2.70" fill="#f1d5d7"/>
<rect x="265.82" y="290.60" width="2.2" height="4.20" fill="#9fc468"/>
<rect x="268.51" y="292.10" width="3.1" height="4.20" fill="#e27272"/>
<rect x="268.51" y="289.10" width="3.1" height="4.20" fill="#f1d5d7"/>
<rect x="268.96" y="287.60" width="2.2" height="2.70" fill="#9fc468"/>
<rect x="272.11" y="292.10" width="2.2" height="4.20" fill="#9fc468"/>
<rect x="275.25" y="293.60" width="2.2" height="2.70" fill="#7fae48"/>
<rect x="278.40" y="292.10" width="2.2" height="4.20" fill="#9fc468"/>
<rect x="281.55" y="292.10" width="2.2" height="4.20" fill="#9fc468"/>
<rect x="284.24" y="293.60" width="3.1" height="2.70" fill="#e27272"/>
<rect x="284.69" y="290.60" width="2.2" height="4.20" fill="#9fc468"/>
<rect x="287.39" y="293.60" width="3.1" height="2.70" fill="#f1d5d7"/>
<rect x="287.84" y="290.60" width="2.2" height="4.20" fill="#9fc468"/>
<rect x="290.98" y="290.60" width="2.2" height="5.70" fill="#9fc468"/>
<rect x="293.68" y="293.60" width="3.1" height="2.70" fill="#e27272"/>
<rect x="293.68" y="292.10" width="3.1" height="2.70" fill="#f1d5d7"/>
<rect x="294.13" y="290.60" width="2.2" height="2.70" fill="#9fc468"/>
<rect x="297.27" y="293.60" width="2.2" height="2.70" fill="#9fc468"/>
<rect x="300.42" y="293.60" width="2.2" height="2.70" fill="#9fc468"/>
<rect x="303.11" y="293.60" width="3.1" height="2.70" fill="#e27272"/>
<rect x="303.56" y="292.10" width="2.2" height="2.70" fill="#9fc468"/>
<rect x="306.26" y="293.60" width="3.1" height="2.70" fill="#e27272"/>
<rect x="306.71" y="284.60" width="2.2" height="10.20" fill="#9fc468"/>
<rect x="309.85" y="283.10" width="2.2" height="13.20" fill="#9fc468"/>
<rect x="312.55" y="292.10" width="3.1" height="4.20" fill="#e27272"/>
<rect x="312.55" y="290.60" width="3.1" height="2.70" fill="#f1d5d7"/>
<rect x="313.00" y="281.60" width="2.2" height="10.20" fill="#9fc468"/>
<rect x="315.69" y="292.10" width="3.1" height="4.20" fill="#f1d5d7"/>
<rect x="318.84" y="293.60" width="3.1" height="2.70" fill="#f1d5d7"/>
<rect x="319.29" y="290.60" width="2.2" height="4.20" fill="#9fc468"/>
<rect x="322.43" y="293.60" width="2.2" height="2.70" fill="#7fae48"/>
<rect x="322.43" y="289.10" width="2.2" height="5.70" fill="#9fc468"/>
<rect x="325.58" y="292.10" width="2.2" height="4.20" fill="#9fc468"/>
<rect x="328.27" y="289.10" width="3.1" height="7.20" fill="#f1d5d7"/>
<rect x="328.72" y="287.60" width="2.2" height="2.70" fill="#9fc468"/>
<rect x="331.87" y="284.60" width="2.2" height="11.70" fill="#9fc468"/>
<rect x="335.01" y="289.10" width="2.2" height="7.20" fill="#9fc468"/>
<rect x="337.71" y="293.60" width="3.1" height="2.70" fill="#f1d5d7"/>
<rect x="341.30" y="292.10" width="2.2" height="4.20" fill="#9fc468"/>
<rect x="344.00" y="293.60" width="3.1" height="2.70" fill="#f1d5d7"/>
<rect x="344.45" y="283.10" width="2.2" height="11.70" fill="#9fc468"/>
<rect x="347.14" y="293.60" width="3.1" height="2.70" fill="#f1d5d7"/>
<rect x="347.59" y="292.10" width="2.2" height="2.70" fill="#9fc468"/>
<rect x="350.29" y="293.60" width="3.1" height="2.70" fill="#e27272"/>
<rect x="350.74" y="289.10" width="2.2" height="5.70" fill="#9fc468"/>
<rect x="353.88" y="293.60" width="2.2" height="2.70" fill="#9fc468"/>
<rect x="356.58" y="293.60" width="3.1" height="2.70" fill="#e27272"/>
<rect x="360.17" y="293.60" width="2.2" height="2.70" fill="#7fae48"/>
<rect x="360.17" y="289.10" width="2.2" height="5.70" fill="#9fc468"/>
<rect x="363.32" y="293.60" width="2.2" height="2.70" fill="#7fae48"/>
<rect x="362.87" y="289.10" width="3.1" height="5.70" fill="#e27272"/>
<rect x="363.32" y="286.10" width="2.2" height="4.20" fill="#9fc468"/>
<rect x="366.46" y="293.60" width="2.2" height="2.70" fill="#7fae48"/>
<rect x="366.01" y="292.10" width="3.1" height="2.70" fill="#e27272"/>
<rect x="366.01" y="290.60" width="3.1" height="2.70" fill="#f1d5d7"/>
<rect x="369.16" y="293.60" width="3.1" height="2.70" fill="#e27272"/>
<rect x="369.61" y="287.60" width="2.2" height="7.20" fill="#9fc468"/>
<rect x="372.75" y="293.60" width="2.2" height="2.70" fill="#7fae48"/>
<rect x="372.75" y="292.10" width="2.2" height="2.70" fill="#9fc468"/>
<rect x="375.45" y="293.60" width="3.1" height="2.70" fill="#e27272"/>
<rect x="375.90" y="289.10" width="2.2" height="5.70" fill="#9fc468"/>
<rect x="378.60" y="293.60" width="3.1" height="2.70" fill="#f1d5d7"/>
<rect x="379.05" y="283.10" width="2.2" height="11.70" fill="#9fc468"/>
<rect x="382.19" y="289.10" width="2.2" height="7.20" fill="#9fc468"/>
<rect x="385.34" y="292.10" width="2.2" height="4.20" fill="#9fc468"/>
<rect x="388.48" y="292.10" width="2.2" height="4.20" fill="#9fc468"/>
<rect x="391.63" y="292.10" width="2.2" height="4.20" fill="#9fc468"/>
<rect x="394.77" y="293.60" width="2.2" height="2.70" fill="#9fc468"/>
<rect x="397.47" y="293.60" width="3.1" height="2.70" fill="#f1d5d7"/>
<rect x="400.61" y="290.60" width="3.1" height="5.70" fill="#f1d5d7"/>
<rect x="401.06" y="277.10" width="2.2" height="14.70" fill="#9fc468"/>
<rect x="403.76" y="287.60" width="3.1" height="8.70" fill="#e27272"/>
<rect x="404.21" y="274.10" width="2.2" height="14.70" fill="#9fc468"/>
<rect x="406.90" y="292.10" width="3.1" height="4.20" fill="#e27272"/>
<rect x="406.90" y="290.60" width="3.1" height="2.70" fill="#f1d5d7"/>
<rect x="407.35" y="280.10" width="2.2" height="11.70" fill="#9fc468"/>
<rect x="410.05" y="293.60" width="3.1" height="2.70" fill="#f1d5d7"/>
<rect x="410.50" y="287.60" width="2.2" height="7.20" fill="#9fc468"/>
<rect x="413.64" y="293.60" width="2.2" height="2.70" fill="#9fc468"/>
<rect x="416.79" y="292.10" width="2.2" height="4.20" fill="#9fc468"/>
<rect x="419.48" y="293.60" width="3.1" height="2.70" fill="#f1d5d7"/>
<rect x="419.93" y="292.10" width="2.2" height="2.70" fill="#9fc468"/>
<rect x="422.63" y="293.60" width="3.1" height="2.70" fill="#e27272"/>
<rect x="423.08" y="287.60" width="2.2" height="7.20" fill="#9fc468"/>
<rect x="425.77" y="293.60" width="3.1" height="2.70" fill="#f1d5d7"/>
<rect x="426.22" y="287.60" width="2.2" height="7.20" fill="#9fc468"/>
<rect x="428.92" y="293.60" width="3.1" height="2.70" fill="#e27272"/>
<rect x="432.51" y="292.10" width="2.2" height="4.20" fill="#9fc468"/>
<rect x="435.66" y="293.60" width="2.2" height="2.70" fill="#9fc468"/>
<rect x="438.80" y="293.60" width="2.2" height="2.70" fill="#9fc468"/>
<rect x="441.95" y="293.60" width="2.2" height="2.70" fill="#9fc468"/>
<rect x="444.64" y="289.10" width="3.1" height="7.20" fill="#f1d5d7"/>
<rect x="445.09" y="284.60" width="2.2" height="5.70" fill="#9fc468"/>
<rect x="447.79" y="292.10" width="3.1" height="4.20" fill="#e27272"/>
<rect x="450.93" y="290.60" width="3.1" height="5.70" fill="#e27272"/>
<rect x="451.38" y="287.60" width="2.2" height="4.20" fill="#9fc468"/>
<rect x="454.53" y="293.60" width="2.2" height="2.70" fill="#9fc468"/>
<rect x="457.22" y="293.60" width="3.1" height="2.70" fill="#e27272"/>
<rect x="460.37" y="292.10" width="3.1" height="4.20" fill="#f1d5d7"/>
<rect x="460.82" y="287.60" width="2.2" height="5.70" fill="#9fc468"/>
<rect x="463.51" y="292.10" width="3.1" height="4.20" fill="#e27272"/>
<rect x="463.51" y="290.60" width="3.1" height="2.70" fill="#f1d5d7"/>
<rect x="463.96" y="278.60" width="2.2" height="13.20" fill="#9fc468"/>
<rect x="466.66" y="293.60" width="3.1" height="2.70" fill="#f1d5d7"/>
<rect x="467.11" y="289.10" width="2.2" height="5.70" fill="#9fc468"/>
<rect x="470.25" y="293.60" width="2.2" height="2.70" fill="#9fc468"/>
<rect x="472.95" y="293.60" width="3.1" height="2.70" fill="#e27272"/>
<rect x="473.40" y="284.60" width="2.2" height="10.20" fill="#9fc468"/>
<rect x="476.10" y="293.60" width="3.1" height="2.70" fill="#e27272"/>
<rect x="479.24" y="293.60" width="3.1" height="2.70" fill="#f1d5d7"/>
<rect x="479.69" y="290.60" width="2.2" height="4.20" fill="#9fc468"/>
<rect x="482.39" y="290.60" width="3.1" height="5.70" fill="#e27272"/>
<rect x="482.84" y="284.60" width="2.2" height="7.20" fill="#9fc468"/>
<rect x="485.53" y="293.60" width="3.1" height="2.70" fill="#f1d5d7"/>
<rect x="485.98" y="286.10" width="2.2" height="8.70" fill="#9fc468"/>
<rect x="489.13" y="292.10" width="2.2" height="4.20" fill="#9fc468"/>
<rect x="492.27" y="293.60" width="2.2" height="2.70" fill="#9fc468"/>
<rect x="495.42" y="293.60" width="2.2" height="2.70" fill="#9fc468"/>
<rect x="498.56" y="292.10" width="2.2" height="4.20" fill="#9fc468"/>
<rect x="501.71" y="293.60" width="2.2" height="2.70" fill="#9fc468"/>
<rect x="504.40" y="292.10" width="3.1" height="4.20" fill="#e27272"/>
<rect x="504.85" y="289.10" width="2.2" height="4.20" fill="#9fc468"/>
<rect x="508.00" y="292.10" width="2.2" height="4.20" fill="#9fc468"/>
<rect x="511.14" y="292.10" width="2.2" height="4.20" fill="#9fc468"/>
<rect x="514.29" y="290.60" width="2.2" height="5.70" fill="#9fc468"/>
<rect x="516.98" y="293.60" width="3.1" height="2.70" fill="#e27272"/>
<rect x="517.43" y="290.60" width="2.2" height="4.20" fill="#9fc468"/>
<rect x="520.13" y="293.60" width="3.1" height="2.70" fill="#e27272"/>
<rect x="520.58" y="289.10" width="2.2" height="5.70" fill="#9fc468"/>
<rect x="523.72" y="292.10" width="2.2" height="4.20" fill="#9fc468"/>
<rect x="526.42" y="293.60" width="3.1" height="2.70" fill="#e27272"/>
<rect x="526.42" y="290.60" width="3.1" height="4.20" fill="#f1d5d7"/>
<rect x="526.87" y="289.10" width="2.2" height="2.70" fill="#9fc468"/>
<rect x="529.56" y="293.60" width="3.1" height="2.70" fill="#e27272"/>
<rect x="529.56" y="292.10" width="3.1" height="2.70" fill="#f1d5d7"/>
<rect x="530.01" y="287.60" width="2.2" height="5.70" fill="#9fc468"/>
<rect x="533.16" y="292.10" width="2.2" height="4.20" fill="#9fc468"/>
<rect x="535.85" y="293.60" width="3.1" height="2.70" fill="#f1d5d7"/>
<rect x="536.30" y="290.60" width="2.2" height="4.20" fill="#9fc468"/>
<rect x="539.00" y="293.60" width="3.1" height="2.70" fill="#e27272"/>
<rect x="542.59" y="292.10" width="2.2" height="4.20" fill="#9fc468"/>
<rect x="545.74" y="293.60" width="2.2" height="2.70" fill="#9fc468"/>
<rect x="548.88" y="293.60" width="2.2" height="2.70" fill="#9fc468"/>
<rect x="552.03" y="293.60" width="2.2" height="2.70" fill="#9fc468"/>
<rect x="555.17" y="293.60" width="2.2" height="2.70" fill="#9fc468"/>
<rect x="558.32" y="290.60" width="2.2" height="5.70" fill="#9fc468"/>
<rect x="561.46" y="293.60" width="2.2" height="2.70" fill="#9fc468"/>
<rect x="564.61" y="293.60" width="2.2" height="2.70" fill="#9fc468"/>
<rect x="567.75" y="293.60" width="2.2" height="2.70" fill="#9fc468"/>
<rect x="570.90" y="293.60" width="2.2" height="2.70" fill="#9fc468"/>
</g>
<polyline points="182.0,292.1 185.1,293.6 188.3,292.1 191.4,287.6 194.6,292.1 197.7,290.6 200.9,290.6 204.0,292.1 207.2,283.1 210.3,284.6 213.5,290.6 216.6,290.6 219.7,286.1 222.9,290.6 226.0,293.6 229.2,290.6 232.3,293.6 235.5,292.1 238.6,292.1 241.8,293.6 244.9,290.6 248.0,292.1 251.2,293.6 254.3,293.6 257.5,290.6 260.6,293.6 263.8,281.6 266.9,290.6 270.1,287.6 273.2,292.1 276.4,293.6 279.5,292.1 282.6,292.1 285.8,290.6 288.9,290.6 292.1,290.6 295.2,290.6 298.4,293.6 301.5,293.6 304.7,292.1 307.8,284.6 311.0,283.1 314.1,281.6 317.2,292.1 320.4,290.6 323.5,289.1 326.7,292.1 329.8,287.6 333.0,284.6 336.1,289.1 339.3,293.6 342.4,292.1 345.5,283.1 348.7,292.1 351.8,289.1 355.0,293.6 358.1,293.6 361.3,289.1 364.4,286.1 367.6,290.6 370.7,287.6 373.9,292.1 377.0,289.1 380.1,283.1 383.3,289.1 386.4,292.1 389.6,292.1 392.7,292.1 395.9,293.6 399.0,293.6 402.2,277.1 405.3,274.1 408.5,280.1 411.6,287.6 414.7,293.6 417.9,292.1 421.0,292.1 424.2,287.6 427.3,287.6 430.5,293.6 433.6,292.1 436.8,293.6 439.9,293.6 443.0,293.6 446.2,284.6 449.3,292.1 452.5,287.6 455.6,293.6 458.8,293.6 461.9,287.6 465.1,278.6 468.2,289.1 471.4,293.6 474.5,284.6 477.6,293.6 480.8,290.6 483.9,284.6 487.1,286.1 490.2,292.1 493.4,293.6 496.5,293.6 499.7,292.1 502.8,293.6 506.0,289.1 509.1,292.1 512.2,292.1 515.4,290.6 518.5,290.6 521.7,289.1 524.8,292.1 528.0,289.1 531.1,287.6 534.3,292.1 537.4,290.6 540.5,293.6 543.7,292.1 546.8,293.6 550.0,293.6 553.1,293.6 556.3,293.6 559.4,290.6 562.6,293.6 565.7,293.6 568.9,293.6 572.0,293.6" fill="none" stroke="#000" stroke-width="0.7"/>
<g fill="#0d0d12">
<circle cx="182.0" cy="292.1" r="2.1"/>
<circle cx="185.1" cy="293.6" r="2.1"/>
<circle cx="188.3" cy="292.1" r="2.1"/>
<circle cx="191.4" cy="287.6" r="2.1"/>
<circle cx="194.6" cy="292.1" r="2.1"/>
<circle cx="197.7" cy="290.6" r="2.1"/>
<circle cx="200.9" cy="290.6" r="2.1"/>
<circle cx="204.0" cy="292.1" r="2.1"/>
<circle cx="207.2" cy="283.1" r="2.1"/>
<circle cx="210.3" cy="284.6" r="2.1"/>
<circle cx="213.5" cy="290.6" r="2.1"/>
<circle cx="216.6" cy="290.6" r="2.1"/>
<circle cx="219.7" cy="286.1" r="2.1"/>
<circle cx="222.9" cy="290.6" r="2.1"/>
<circle cx="226.0" cy="293.6" r="2.1"/>
<circle cx="229.2" cy="290.6" r="2.1"/>
<circle cx="232.3" cy="293.6" r="2.1"/>
<circle cx="235.5" cy="292.1" r="2.1"/>
<circle cx="238.6" cy="292.1" r="2.1"/>
<circle cx="241.8" cy="293.6" r="2.1"/>
<circle cx="244.9" cy="290.6" r="2.1"/>
<circle cx="248.0" cy="292.1" r="2.1"/>
<circle cx="251.2" cy="293.6" r="2.1"/>
<circle cx="254.3" cy="293.6" r="2.1"/>
<circle cx="257.5" cy="290.6" r="2.1"/>
<circle cx="260.6" cy="293.6" r="2.1"/>
<circle cx="263.8" cy="281.6" r="2.1"/>
<circle cx="266.9" cy="290.6" r="2.1"/>
<circle cx="270.1" cy="287.6" r="2.1"/>
<circle cx="273.2" cy="292.1" r="2.1"/>
<circle cx="276.4" cy="293.6" r="2.1"/>
<circle cx="279.5" cy="292.1" r="2.1"/>
<circle cx="282.6" cy="292.1" r="2.1"/>
<circle cx="285.8" cy="290.6" r="2.1"/>
<circle cx="288.9" cy="290.6" r="2.1"/>
<circle cx="292.1" cy="290.6" r="2.1"/>
<circle cx="295.2" cy="290.6" r="2.1"/>
<circle cx="298.4" cy="293.6" r="2.1"/>
<circle cx="301.5" cy="293.6" r="2.1"/>
<circle cx="304.7" cy="292.1" r="2.1"/>
<circle cx="307.8" cy="284.6" r="2.1"/>
<circle cx="311.0" cy="283.1" r="2.1"/>
<circle cx="314.1" cy="281.6" r="2.1"/>
<circle cx="317.2" cy="292.1" r="2.1"/>
<circle cx="320.4" cy="290.6" r="2.1"/>
<circle cx="323.5" cy="289.1" r="2.1"/>
<circle cx="326.7" cy="292.1" r="2.1"/>
<circle cx="329.8" cy="287.6" r="2.1"/>
<circle cx="333.0" cy="284.6" r="2.1"/>
<circle cx="336.1" cy="289.1" r="2.1"/>
<circle cx="339.3" cy="293.6" r="2.1"/>
<circle cx="342.4" cy="292.1" r="2.1"/>
<circle cx="345.5" cy="283.1" r="2.1"/>
<circle cx="348.7" cy="292.1" r="2.1"/>
<circle cx="351.8" cy="289.1" r="2.1"/>
<circle cx="355.0" cy="293.6" r="2.1"/>
<circle cx="358.1" cy="293.6" r="2.1"/>
<circle cx="361.3" cy="289.1" r="2.1"/>
<circle cx="364.4" cy="286.1" r="2.1"/>
<circle cx="367.6" cy="290.6" r="2.1"/>
<circle cx="370.7" cy="287.6" r="2.1"/>
<circle cx="373.9" cy="292.1" r="2.1"/>
<circle cx="377.0" cy="289.1" r="2.1"/>
<circle cx="380.1" cy="283.1" r="2.1"/>
<circle cx="383.3" cy="289.1" r="2.1"/>
<circle cx="386.4" cy="292.1" r="2.1"/>
<circle cx="389.6" cy="292.1" r="2.1"/>
<circle cx="392.7" cy="292.1" r="2.1"/>
<circle cx="395.9" cy="293.6" r="2.1"/>
<circle cx="399.0" cy="293.6" r="2.1"/>
<circle cx="402.2" cy="277.1" r="2.1"/>
<circle cx="405.3" cy="274.1" r="2.1"/>
<circle cx="408.5" cy="280.1" r="2.1"/>
<circle cx="411.6" cy="287.6" r="2.1"/>
<circle cx="414.7" cy="293.6" r="2.1"/>
<circle cx="417.9" cy="292.1" r="2.1"/>
<circle cx="421.0" cy="292.1" r="2.1"/>
<circle cx="424.2" cy="287.6" r="2.1"/>
<circle cx="427.3" cy="287.6" r="2.1"/>
<circle cx="430.5" cy="293.6" r="2.1"/>
<circle cx="433.6" cy="292.1" r="2.1"/>
<circle cx="436.8" cy="293.6" r="2.1"/>
<circle cx="439.9" cy="293.6" r="2.1"/>
<circle cx="443.0" cy="293.6" r="2.1"/>
<circle cx="446.2" cy="284.6" r="2.1"/>
<circle cx="449.3" cy="292.1" r="2.1"/>
<circle cx="452.5" cy="287.6" r="2.1"/>
<circle cx="455.6" cy="293.6" r="2.1"/>
<circle cx="458.8" cy="293.6" r="2.1"/>
<circle cx="461.9" cy="287.6" r="2.1"/>
<circle cx="465.1" cy="278.6" r="2.1"/>
<circle cx="468.2" cy="289.1" r="2.1"/>
<circle cx="471.4" cy="293.6" r="2.1"/>
<circle cx="474.5" cy="284.6" r="2.1"/>
<circle cx="477.6" cy="293.6" r="2.1"/>
<circle cx="480.8" cy="290.6" r="2.1"/>
<circle cx="483.9" cy="284.6" r="2.1"/>
<circle cx="487.1" cy="286.1" r="2.1"/>
<circle cx="490.2" cy="292.1" r="2.1"/>
<circle cx="493.4" cy="293.6" r="2.1"/>
<circle cx="496.5" cy="293.6" r="2.1"/>
<circle cx="499.7" cy="292.1" r="2.1"/>
<circle cx="502.8" cy="293.6" r="2.1"/>
<circle cx="506.0" cy="289.1" r="2.1"/>
<circle cx="509.1" cy="292.1" r="2.1"/>
<circle cx="512.2" cy="292.1" r="2.1"/>
<circle cx="515.4" cy="290.6" r="2.1"/>
<circle cx="518.5" cy="290.6" r="2.1"/>
<circle cx="521.7" cy="289.1" r="2.1"/>
<circle cx="524.8" cy="292.1" r="2.1"/>
<circle cx="528.0" cy="289.1" r="2.1"/>
<circle cx="531.1" cy="287.6" r="2.1"/>
<circle cx="534.3" cy="292.1" r="2.1"/>
<circle cx="537.4" cy="290.6" r="2.1"/>
<circle cx="540.5" cy="293.6" r="2.1"/>
<circle cx="543.7" cy="292.1" r="2.1"/>
<circle cx="546.8" cy="293.6" r="2.1"/>
<circle cx="550.0" cy="293.6" r="2.1"/>
<circle cx="553.1" cy="293.6" r="2.1"/>
<circle cx="556.3" cy="293.6" r="2.1"/>
<circle cx="559.4" cy="290.6" r="2.1"/>
<circle cx="562.6" cy="293.6" r="2.1"/>
<circle cx="565.7" cy="293.6" r="2.1"/>
<circle cx="568.9" cy="293.6" r="2.1"/>
<circle cx="572.0" cy="293.6" r="2.1"/>
</g>
<rect x="175" y="272" width="405" height="0.6" fill="#ccc"/>
<rect x="180.7" y="280.3" width="3.2" height="7.2" rx="0.6" fill="#f2f2f2" stroke="#999" stroke-width="0.5"/>
<rect x="182.05" y="282.3" width="0.5" height="3.2" fill="#999"/>
<rect x="569.8" y="280.3" width="3.2" height="7.2" rx="0.6" fill="#f2f2f2" stroke="#999" stroke-width="0.5"/>
<rect x="571.15" y="282.3" width="0.5" height="3.2" fill="#999"/>
<rect x="174.6" y="296" width="405.6" height="7.6" fill="#f2f2f2"/>
<rect x="182.3" y="296" width="390.4" height="7.6" fill="#cccccc"/>
<rect x="174.6" y="296" width="7.7" height="7.6" fill="#e6e6e6"/>
<rect x="572.7" y="296" width="7.5" height="7.6" fill="#e6e6e6"/>
<path d="M179.6 298.2 L177.2 299.8 L179.6 301.4Z" fill="#222"/>
<path d="M575.3 298.2 L577.7 299.8 L575.3 301.4Z" fill="#222"/>
<g fill="#555"><rect x="375.6" y="298.2" width="0.5" height="3.2"/><rect x="376.9" y="298.2" width="0.5" height="3.2"/><rect x="378.2" y="298.2" width="0.5" height="3.2"/></g>
<g font-family="'DejaVu Sans', 'Liberation Sans', sans-serif" font-size="6.4">
<rect x="607.8" y="114.6" width="9.4" height="1.6" rx="0.5" fill="#3c3c3c"/>
<text x="640.9" y="117.7" text-anchor="end" fill="#666" font-size="6.7" letter-spacing="0.25">100%</text>
<text x="663.9" y="117.7" text-anchor="end" fill="#666" font-size="6.7" letter-spacing="0.25">(403)</text>
<text x="666.6" y="117.7" fill="#474747" font-weight="bold" font-family="'DejaVu Sans Condensed', 'DejaVu Sans', sans-serif" font-size="6.4">Всі</text>
<circle cx="612.3" cy="126.3" r="3.25" fill="#8bc34a" stroke="#000" stroke-opacity="0.13" stroke-width="0.45"/>
<text x="640.9" y="128.6" text-anchor="end" fill="#666" font-size="6.7" letter-spacing="0.25">68.7%</text>
<text x="663.9" y="128.6" text-anchor="end" fill="#666" font-size="6.7" letter-spacing="0.25">(277)</text>
<text x="666.6" y="128.6" fill="#474747" font-weight="bold" font-family="'DejaVu Sans Condensed', 'DejaVu Sans', sans-serif" font-size="6.4">Завершений</text>
<circle cx="612.3" cy="137.2" r="3.25" fill="#f8cfd5" stroke="#000" stroke-opacity="0.13" stroke-width="0.45"/>
<text x="640.9" y="139.5" text-anchor="end" fill="#666" font-size="6.7" letter-spacing="0.25">10.2%</text>
<text x="663.9" y="139.5" text-anchor="end" fill="#666" font-size="6.7" letter-spacing="0.25">(41)</text>
<text x="666.6" y="139.5" fill="#474747" font-weight="bold" font-family="'DejaVu Sans Condensed', 'DejaVu Sans', sans-serif" font-size="6.4">Відмова</text>
<circle cx="612.3" cy="148.2" r="3.25" fill="#e35252" stroke="#000" stroke-opacity="0.13" stroke-width="0.45"/>
<text x="640.9" y="150.5" text-anchor="end" fill="#666" font-size="6.7" letter-spacing="0.25">8.7%</text>
<text x="663.9" y="150.5" text-anchor="end" fill="#666" font-size="6.7" letter-spacing="0.25">(35)</text>
<text x="666.6" y="150.5" fill="#474747" font-weight="bold" font-family="'DejaVu Sans Condensed', 'DejaVu Sans', sans-serif" font-size="6.4">DO Возврат склад</text>
<circle cx="612.3" cy="159.1" r="3.25" fill="#e35252" stroke="#000" stroke-opacity="0.13" stroke-width="0.45"/>
<text x="640.9" y="161.4" text-anchor="end" fill="#666" font-size="6.7" letter-spacing="0.25">6.7%</text>
<text x="663.9" y="161.4" text-anchor="end" fill="#666" font-size="6.7" letter-spacing="0.25">(27)</text>
<text x="666.6" y="161.4" fill="#474747" font-weight="bold" font-family="'DejaVu Sans Condensed', 'DejaVu Sans', sans-serif" font-size="6.4">Повернення (завершений)</text>
<circle cx="612.3" cy="170.0" r="3.25" fill="#6cb33f" stroke="#000" stroke-opacity="0.13" stroke-width="0.45"/>
<text x="640.9" y="172.3" text-anchor="end" fill="#666" font-size="6.7" letter-spacing="0.25">3.2%</text>
<text x="663.9" y="172.3" text-anchor="end" fill="#666" font-size="6.7" letter-spacing="0.25">(13)</text>
<text x="666.6" y="172.3" fill="#474747" font-weight="bold" font-family="'DejaVu Sans Condensed', 'DejaVu Sans', sans-serif" font-size="6.4">DO Завершено</text>
<circle cx="612.3" cy="180.9" r="3.25" fill="#e0857b" stroke="#000" stroke-opacity="0.13" stroke-width="0.45"/>
<text x="640.9" y="183.2" text-anchor="end" fill="#666" font-size="6.7" letter-spacing="0.25">0.7%</text>
<text x="663.9" y="183.2" text-anchor="end" fill="#666" font-size="6.7" letter-spacing="0.25">(3)</text>
<text x="666.6" y="183.2" fill="#474747" font-weight="bold" font-family="'DejaVu Sans Condensed', 'DejaVu Sans', sans-serif" font-size="6.4">Утилізація</text>
<circle cx="612.3" cy="191.8" r="3.25" fill="#b4d6d4" stroke="#000" stroke-opacity="0.13" stroke-width="0.45"/>
<text x="640.9" y="194.1" text-anchor="end" fill="#666" font-size="6.7" letter-spacing="0.25">0.5%</text>
<text x="663.9" y="194.1" text-anchor="end" fill="#666" font-size="6.7" letter-spacing="0.25">(2)</text>
<text x="666.6" y="194.1" fill="#474747" font-weight="bold" font-family="'DejaVu Sans Condensed', 'DejaVu Sans', sans-serif" font-size="6.4">Самовивіз</text>
<circle cx="612.3" cy="202.8" r="3.25" fill="#86f0ff" stroke="#000" stroke-opacity="0.13" stroke-width="0.45"/>
<text x="640.9" y="205.1" text-anchor="end" fill="#666" font-size="6.7" letter-spacing="0.25">0.2%</text>
<text x="663.9" y="205.1" text-anchor="end" fill="#666" font-size="6.7" letter-spacing="0.25">(1)</text>
<text x="666.6" y="205.1" fill="#474747" font-weight="bold" font-family="'DejaVu Sans Condensed', 'DejaVu Sans', sans-serif" font-size="6.4">Нема в наявності</text>
<circle cx="612.3" cy="213.7" r="3.25" fill="#fff23f" stroke="#000" stroke-opacity="0.13" stroke-width="0.45"/>
<text x="640.9" y="216.0" text-anchor="end" fill="#666" font-size="6.7" letter-spacing="0.25">0.2%</text>
<text x="663.9" y="216.0" text-anchor="end" fill="#666" font-size="6.7" letter-spacing="0.25">(1)</text>
<text x="666.6" y="216.0" fill="#474747" font-weight="bold" font-family="'DejaVu Sans Condensed', 'DejaVu Sans', sans-serif" font-size="6.4">DO Отправлено</text>
<circle cx="612.3" cy="224.6" r="3.25" fill="#d9e7c8" stroke="#000" stroke-opacity="0.13" stroke-width="0.45"/>
<text x="640.9" y="226.9" text-anchor="end" fill="#666" font-size="6.7" letter-spacing="0.25">0.2%</text>
<text x="663.9" y="226.9" text-anchor="end" fill="#666" font-size="6.7" letter-spacing="0.25">(1)</text>
<text x="666.6" y="226.9" fill="#474747" font-weight="bold" font-family="'DejaVu Sans Condensed', 'DejaVu Sans', sans-serif" font-size="6.4">Прийнятий</text>
<circle cx="612.3" cy="235.5" r="3.25" fill="#ffe97a" stroke="#000" stroke-opacity="0.13" stroke-width="0.45"/>
<text x="640.9" y="237.8" text-anchor="end" fill="#666" font-size="6.7" letter-spacing="0.25">0.2%</text>
<text x="663.9" y="237.8" text-anchor="end" fill="#666" font-size="6.7" letter-spacing="0.25">(1)</text>
<text x="666.6" y="237.8" fill="#474747" font-weight="bold" font-family="'DejaVu Sans Condensed', 'DejaVu Sans', sans-serif" font-size="6.4">Відправлений</text>
<circle cx="612.3" cy="246.4" r="3.25" fill="#e9e9e9" stroke="#000" stroke-opacity="0.13" stroke-width="0.45"/>
<text x="640.9" y="248.7" text-anchor="end" fill="#666" font-size="6.7" letter-spacing="0.25">0.2%</text>
<text x="663.9" y="248.7" text-anchor="end" fill="#666" font-size="6.7" letter-spacing="0.25">(1)</text>
<text x="666.6" y="248.7" fill="#474747" font-weight="bold" font-family="'DejaVu Sans Condensed', 'DejaVu Sans', sans-serif" font-size="6.4">Новий</text>
</g>
</svg>

<!-- stats -->
<div class="t st-h" style="left:310.3px;top:321.9px">Замовлення:</div><div class="t st-h r" style="right:581.6px;top:321.9px">403</div>
<div class="t st-s" style="left:310.3px;top:334.9px">Без допродажів:</div><div class="t st-s r" style="right:581.6px;top:334.9px">370</div>
<div class="t st-s" style="left:310.3px;top:344.9px">Допродані:</div><div class="t st-s r" style="right:581.6px;top:344.9px">33</div>
<div class="t st-s" style="left:320.5px;top:354.8px">8.2%</div>

<div class="t st-h" style="left:397.2px;top:321.9px">Товари:</div><div class="t st-h r" style="right:511.8px;top:321.9px">845</div>
<div class="t st-s" style="left:397.2px;top:334.9px">Основні:</div><div class="t st-s r" style="right:511.8px;top:334.9px">718</div>
<div class="t st-s" style="left:397.2px;top:344.9px">Допродані:</div><div class="t st-s r" style="right:511.8px;top:344.9px">127</div>
<div class="t st-s" style="left:407.5px;top:354.8px">15.0%</div>

<div class="t st-h" style="left:471.4px;top:321.9px">Маржа:</div><div class="t st-h r" style="right:420px;top:321.9px">43 369.45</div>
<div class="t st-s" style="left:471.4px;top:334.9px">Основна:</div><div class="t st-s r" style="right:420px;top:334.9px">40 618.20</div>
<div class="t st-s" style="left:471.4px;top:344.9px">Допродажу:</div><div class="t st-s r" style="right:420px;top:344.9px">2 751.25</div>
<div class="t st-s" style="left:471.4px;top:354.8px">Середня:</div><div class="t st-s r" style="right:420px;top:354.8px">107.62</div>

<div class="t st-h" style="left:562.5px;top:321.9px">Сума:</div><div class="t st-h r" style="right:324px;top:321.9px">273 529.94</div>
<div class="t st-s" style="left:562.5px;top:334.9px">Основна:</div><div class="t st-s r" style="right:324px;top:334.9px">245 871.02</div>
<div class="t st-s" style="left:562.5px;top:344.9px">Допродажу:</div><div class="t st-s r" style="right:324px;top:344.9px">27 658.92</div>
<div class="t st-s" style="left:562.5px;top:354.8px">Середня:</div><div class="t st-s r" style="right:324px;top:354.8px">678.73</div>

<!-- bag icons -->
<svg class="abs" style="left:310px;top:353.6px" width="9.5" height="9.5" viewBox="0 0 19 19"><path d="M3.5 6.5 H13.5 L15 12 M3.5 6.5 L1.5 16.5 H10" fill="none" stroke="#555" stroke-width="1.3" stroke-linejoin="round"/><path d="M5.5 6.5 Q5.5 1.5 8.5 1.5 Q11.5 1.5 11.5 6.5" fill="none" stroke="#555" stroke-width="1.3"/><text x="12" y="18" font-size="6.5" fill="#555" font-family="Liberation Sans, sans-serif">x</text></svg>
<svg class="abs" style="left:397px;top:353.6px" width="9.5" height="9.5" viewBox="0 0 19 19"><path d="M3.5 6.5 H13.5 L15 12 M3.5 6.5 L1.5 16.5 H10" fill="none" stroke="#555" stroke-width="1.3" stroke-linejoin="round"/><path d="M5.5 6.5 Q5.5 1.5 8.5 1.5 Q11.5 1.5 11.5 6.5" fill="none" stroke="#555" stroke-width="1.3"/><text x="12" y="18" font-size="6.5" fill="#555" font-family="Liberation Sans, sans-serif">x</text></svg>

<!-- bottom icons -->
<svg class="abs" style="left:451.9px;top:385px" width="9.5" height="9" viewBox="0 0 19 18"><path d="M7.5 3.5 H18 M1 8.5 H18 M1 12.5 H18 M1 16.5 H18" stroke="#444" stroke-width="1.7"/><path d="M1 3.5 H5 M3 1.5 V5.5" stroke="#444" stroke-width="1.2"/></svg>
<svg class="abs" style="left:473.6px;top:384.5px" width="10" height="10.5" viewBox="0 0 22 23"><g fill="none" stroke="#888" stroke-width="1.3" stroke-linejoin="round"><path d="M11 1.5 L19.5 5.5 V16 L11 21 L2.5 16 V5.5Z"/><path d="M2.5 5.5 L11 10 L19.5 5.5 M11 10 V21"/><path d="M6.7 3.5 L15.2 7.8"/></g></svg>
</body></html>
